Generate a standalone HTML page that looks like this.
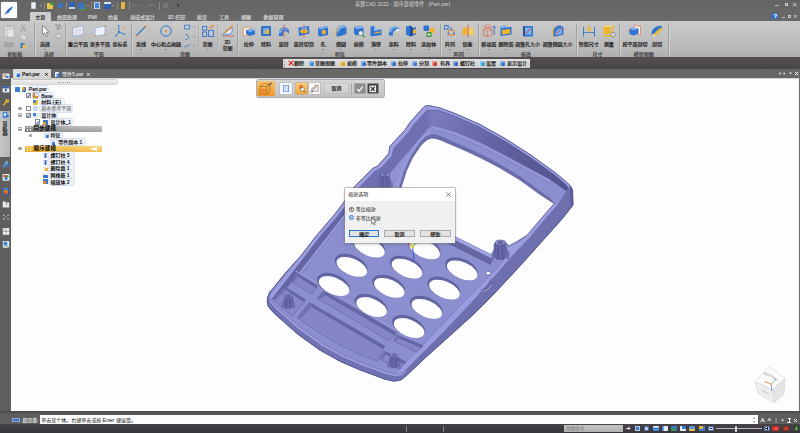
<!DOCTYPE html>
<html lang="zh">
<head>
<meta charset="utf-8">
<title>CAD 2022 - Part.par</title>
<style>
*{box-sizing:border-box;margin:0;padding:0}
html,body{width:800px;height:433px;overflow:hidden;background:#fdfdfd}
body{position:relative;font-family:"Liberation Sans",sans-serif;font-size:5px;color:#222;line-height:1}
.abs,.abs *{position:absolute}
.t{position:absolute;white-space:nowrap;font-size:5px;line-height:6px;color:#2a2a2a;-webkit-text-stroke:0.18px currentColor}
.tw{color:#e8e8e8}
.tx{position:absolute;white-space:nowrap;line-height:1.3;font-family:"Liberation Sans","Noto Sans CJK SC",sans-serif}
.tx.s{-webkit-text-stroke:0.18px currentColor}
.tx.b{font-weight:bold}
.c{text-align:center}
#title{left:0;top:0;width:800px;height:21px;background:linear-gradient(#646464,#6a6a6a)}
#ribbon{left:0;top:21px;width:800px;height:37px;background:linear-gradient(#cacaca,#c0c0c0 45%,#b9b9b9 75%,#adadad)}
#darkbar{left:0;top:57px;width:800px;height:12.2px;background:linear-gradient(#554f53,#48444a)}
#tabrow{left:0;top:68.8px;width:800px;height:9.6px;background:#676767}
#side{left:0;top:78px;width:11px;height:346px;background:#5e5e5e}
#view{left:11px;top:78.3px;width:789px;height:332.7px;background:#fdfdfd;border-top:1px solid #d6d6d6}
#prompt{left:0;top:408px;width:800px;height:11px;background:#5a5a5a}
#status{left:0;top:418px;width:800px;height:15px;background:#484848}
.sep{position:absolute;width:0.8px;background:#a2a2a2;top:23px;height:33px;box-shadow:0.8px 0 0 0 #d2d2d2}
.gl{position:absolute;top:50.5px;font-size:5px;line-height:6px;color:#3a3a3a;text-align:center;white-space:nowrap}
</style>
</head>
<body>
<!-- ===== chrome backgrounds ===== -->
<div class="abs" id="title"></div>
<div class="abs" id="ribbon"></div>
<div class="abs" id="darkbar"></div>
<div class="abs" id="tabrow"></div>
<div class="abs" id="view"></div>
<div class="abs" id="side"></div>

<div style="position:absolute;left:1.0px;top:2.0px;width:15.5px;height:15.5px;background:#fbfbfb;border-radius:1px;box-shadow:0 0 0 0.5px #888"></div>
<svg style="position:absolute;left:1px;top:2px" width="16" height="16" viewBox="0 0 16 16"><path d="M4,12.2 C5.2,8.6 8,5.8 12,4.2 C11.4,6.6 9.6,8.4 7.6,9.6 L9.2,9.4 C7.8,10.8 6,11.4 4.6,11.6 Z" fill="#2d6fc4"/><path d="M3.6,12.8 L6.2,10" stroke="#1d4f94" stroke-width="0.6"/></svg>
<div style="position:absolute;left:31.0px;top:2.0px;width:5.0px;height:7.0px;background:#eef2f8;border-radius:0.6px;box-shadow:inset 0 0 0 0.5px #9ab"></div>
<svg style="position:absolute;left:38.6px;top:3.9px" width="3.8" height="3.8" viewBox="-1.9 -1.9 3.8 3.8"><path d="M-0.90,-0.56 L0.90,-0.56 L0.00,0.56 Z" fill="#c0c0c0"/></svg>
<div style="position:absolute;left:43.5px;top:2.0px;width:0.6px;height:8.0px;background:#888;"></div>
<div style="position:absolute;left:46.5px;top:3.2px;width:6.5px;height:5.5px;background:#e8c84a;border-radius:0.6px;"></div>
<div style="position:absolute;left:49.5px;top:2.0px;width:4.0px;height:3.0px;background:#3d9a3d;border-radius:0.6px;border-radius:2px"></div>
<div style="position:absolute;left:58.0px;top:3.0px;width:4.5px;height:4.5px;background:#3a78c8;border-radius:0.6px;border-radius:2px"></div>
<div style="position:absolute;left:65.5px;top:2.0px;width:0.6px;height:8.0px;background:#888;"></div>
<div style="position:absolute;left:68.5px;top:2.2px;width:6.0px;height:6.5px;background:#2f62b8;border-radius:0.6px;box-shadow:inset 0 -2px 0 0 #c8d4ea"></div>
<div style="position:absolute;left:78.0px;top:2.5px;width:6.0px;height:6.0px;background:#3a70c0;border-radius:0.6px;box-shadow:1.2px 1.2px 0 0 #4a9a4a"></div>
<svg style="position:absolute;left:86.1px;top:3.9px" width="3.8" height="3.8" viewBox="-1.9 -1.9 3.8 3.8"><path d="M-0.90,-0.56 L0.90,-0.56 L0.00,0.56 Z" fill="#c0c0c0"/></svg>
<div style="position:absolute;left:91.0px;top:2.0px;width:0.6px;height:8.0px;background:#888;"></div>
<div style="position:absolute;left:94.0px;top:2.2px;width:6.0px;height:6.5px;background:#4a86d8;border-radius:0.6px;box-shadow:inset 0 0 0 0.8px #dde6f4"></div>
<div style="position:absolute;left:104.0px;top:2.2px;width:6.5px;height:6.5px;background:#2f5fb0;border-radius:0.6px;box-shadow:inset 0 2px 0 0 #d8e2f2"></div>
<svg style="position:absolute;left:111.1px;top:3.9px" width="3.8" height="3.8" viewBox="-1.9 -1.9 3.8 3.8"><path d="M-0.90,-0.56 L0.90,-0.56 L0.00,0.56 Z" fill="#c0c0c0"/></svg>
<div style="position:absolute;left:116.5px;top:2.0px;width:0.6px;height:8.0px;background:#888;"></div>
<div style="position:absolute;left:120.5px;top:2.0px;width:4.5px;height:7.0px;background:#e6b840;border-radius:0.6px;"></div>
<div style="position:absolute;left:129.0px;top:2.0px;width:0.6px;height:8.0px;background:#888;"></div>
<svg style="position:absolute;left:132px;top:2.5px" width="7" height="6" viewBox="0 0 7 6"><path d="M1,3 C2,0.8 5.6,0.8 6,4.4 M1,3 l0.2,-2 M1,3 l2,0.2" stroke="#7e7e7e" stroke-width="0.8" fill="none"/></svg>
<svg style="position:absolute;left:139.6px;top:3.9px" width="3.8" height="3.8" viewBox="-1.9 -1.9 3.8 3.8"><path d="M-0.90,-0.56 L0.90,-0.56 L0.00,0.56 Z" fill="#888"/></svg>
<svg style="position:absolute;left:145.5px;top:2.5px" width="7" height="6" viewBox="0 0 7 6"><path d="M6,3 C5,0.8 1.4,0.8 1,4.4 M6,3 l-0.2,-2 M6,3 l-2,0.2" stroke="#7e7e7e" stroke-width="0.8" fill="none"/></svg>
<svg style="position:absolute;left:153.1px;top:3.9px" width="3.8" height="3.8" viewBox="-1.9 -1.9 3.8 3.8"><path d="M-0.90,-0.56 L0.90,-0.56 L0.00,0.56 Z" fill="#888"/></svg>
<div style="position:absolute;left:158.5px;top:2.0px;width:0.6px;height:8.0px;background:#888;"></div>
<div style="position:absolute;left:163.0px;top:2.5px;width:5.0px;height:5.5px;background:#777;border-radius:0.6px;"></div>
<svg style="position:absolute;left:175.8px;top:3.6px" width="4.4" height="4.4" viewBox="-2.2 -2.2 4.4 4.4"><path d="M-1.20,-0.74 L1.20,-0.74 L0.00,0.74 Z" fill="#2c2c2c"/></svg>
<div style="position:absolute;left:176.6px;top:3.6px;width:2.8px;height:0.6px;background:#2c2c2c;"></div>
<div class="tx" style="left:354.9px;top:1.4px;font-size:5.15px;color:#d2d2d2">青翼CAD 2022 - 顺序建模零件 - [Part.par]</div>
<div class="t tw" style="top:1.5px;left:775.0px;font-size:6px;color:#ddd">–</div>
<div style="position:absolute;left:784.5px;top:2.8px;width:3.2px;height:3.2px;background:transparent;border:0.6px solid #ccc"></div>
<svg style="position:absolute;left:791.8px;top:1.9px" width="5.4" height="5.4" viewBox="-2.7 -2.7 5.4 5.4"><path d="M-1.7,-1.7 L1.7,1.7 M1.7,-1.7 L-1.7,1.7" stroke="#ececec" stroke-width="0.8" fill="none"/></svg>
<div style="position:absolute;left:772.2px;top:12.6px;width:6.0px;height:6.8px;background:#2f6ed0;border-radius:0.8px"></div>
<div class="t" style="top:13.1px;left:773.7px;font-size:5.5px;color:#fff;font-weight:bold">?</div>
<div class="t tw" style="top:13.5px;left:782.0px;font-size:5px;color:#ddd">–</div>
<div style="position:absolute;left:788.0px;top:14.8px;width:2.8px;height:2.8px;background:transparent;border:0.6px solid #ccc"></div>
<svg style="position:absolute;left:792.8px;top:14.0px" width="4.8" height="4.8" viewBox="-2.4 -2.4 4.8 4.8"><path d="M-1.4,-1.4 L1.4,1.4 M1.4,-1.4 L-1.4,1.4" stroke="#ececec" stroke-width="0.7" fill="none"/></svg>
<div style="position:absolute;left:30.0px;top:12.0px;width:20.5px;height:9.5px;background:#cdcdcd;border-radius:1.2px 1.2px 0 0"></div>
<div class="tx s" style="left:35.2px;top:13.5px;font-size:5px;color:#1e1e1e">主页</div>
<div class="tx s" style="left:57.0px;top:13.5px;font-size:5px;color:#d6d6d6">曲面处理</div>
<div class="t tw" style="top:13.8px;left:62.5px;width:60px;text-align:center;color:#d6d6d6">PMI</div>
<div class="tx s" style="left:108.0px;top:13.5px;font-size:5px;color:#d6d6d6">仿真</div>
<div class="tx s" style="left:130.0px;top:13.5px;font-size:5px;color:#d6d6d6">创成式设计</div>
<div class="tx s" style="left:167.6px;top:13.5px;font-size:5px;color:#d6d6d6">3D 打印</div>
<div class="tx s" style="left:197.0px;top:13.5px;font-size:5px;color:#d6d6d6">检查</div>
<div class="tx s" style="left:219.0px;top:13.5px;font-size:5px;color:#d6d6d6">工具</div>
<div class="tx s" style="left:241.0px;top:13.5px;font-size:5px;color:#d6d6d6">视图</div>
<div class="tx s" style="left:263.5px;top:13.5px;font-size:5px;color:#d6d6d6">数据管理</div>

<div class="sep" style="left:34.0px"></div>
<div class="sep" style="left:64.5px"></div>
<div class="sep" style="left:130.5px"></div>
<div class="sep" style="left:237.0px"></div>
<div class="sep" style="left:440.0px"></div>
<div class="sep" style="left:477.5px"></div>
<div class="sep" style="left:575.7px"></div>
<div class="sep" style="left:619.0px"></div>
<div class="sep" style="left:667.5px"></div>
<div class="sep" style="left:198.3px;top:24px;height:25px;opacity:.55"></div>
<div class="sep" style="left:217.3px;top:24px;height:25px;opacity:.55"></div>
<div class="tx s" style="left:7.5px;top:50.9px;font-size:5px;color:#3c3c3c">剪贴板</div>
<div class="tx s" style="left:44.0px;top:50.9px;font-size:5px;color:#3c3c3c">选择</div>
<div class="tx s" style="left:93.7px;top:50.9px;font-size:5px;color:#3c3c3c">平面</div>
<div class="tx s" style="left:180.0px;top:50.9px;font-size:5px;color:#3c3c3c">草图</div>
<div class="tx s" style="left:335.0px;top:50.9px;font-size:5px;color:#3c3c3c">特征</div>
<div class="tx s" style="left:453.7px;top:50.9px;font-size:5px;color:#3c3c3c">阵列</div>
<div class="tx s" style="left:521.0px;top:50.9px;font-size:5px;color:#3c3c3c">修改</div>
<div class="tx s" style="left:592.5px;top:50.9px;font-size:5px;color:#3c3c3c">尺寸</div>
<div class="tx s" style="left:633.7px;top:50.9px;font-size:5px;color:#3c3c3c">模型视图</div>
<svg style="position:absolute;left:1.7px;top:23.5px" width="14" height="14" viewBox="-7 -7 14 14"><rect x="-4.5" y="-5" width="9" height="11" rx="1" fill="#d8d8d8" stroke="#aaa" stroke-width="0.5"/><rect x="-2" y="-6" width="4" height="2.2" fill="#bbb"/><rect x="-1.5" y="-1.5" width="6.5" height="7.5" fill="#e6e6e6" stroke="#b0b0b0" stroke-width="0.4"/></svg>
<div class="tx s" style="left:3.7px;top:41.3px;font-size:5px;color:#9a9a9a">粘贴</div>
<svg style="position:absolute;left:38.0px;top:23.5px" width="14" height="14" viewBox="-7 -7 14 14"><path d="M-2.5,-5.5 L-2.5,3.8 L-0.3,1.8 L1.3,5.5 L2.8,4.8 L1.3,1.2 L4,1.2Z" fill="#fafafa" stroke="#555" stroke-width="0.6"/></svg>
<div class="tx s" style="left:40.0px;top:41.3px;font-size:5px;color:#1c1c1c">选择</div>
<svg style="position:absolute;left:71.0px;top:23.5px" width="14" height="14" viewBox="-7 -7 14 14"><path d="M-5,-3 L5,-5 L5,3.5 L-5,5Z" fill="#f2f6fc" stroke="#6a9ee0" stroke-width="0.55"/><path d="M-2.8,-1.4 L3,-2.4 L3,1.8 L-2.8,2.8Z" fill="#d6e4f6" stroke="#e8a070" stroke-width="0.3"/></svg>
<div class="tx s" style="left:68.0px;top:41.3px;font-size:5px;color:#1c1c1c">重合平面</div>
<svg style="position:absolute;left:93.0px;top:23.5px" width="14" height="14" viewBox="-7 -7 14 14"><path d="M-5,-3 L5,-5 L5,3.5 L-5,5Z" fill="#eef3fb" stroke="#6a9ee0" stroke-width="0.55"/><circle cx="-5" cy="5" r="0.8" fill="#e8862a"/><circle cx="5" cy="-5" r="0.8" fill="#e8862a"/><circle cx="5" cy="3.5" r="0.7" fill="#e8862a"/></svg>
<div class="tx s" style="left:90.0px;top:41.3px;font-size:5px;color:#1c1c1c">更多平面</div>
<svg style="position:absolute;left:113.0px;top:23.5px" width="14" height="14" viewBox="-7 -7 14 14"><path d="M-1,1 L-4,5 M-1,1 L4.5,3.2 M-1,1 L-1.4,-5.5" stroke="#2f74d0" stroke-width="0.8" fill="none"/><circle cx="-1" cy="1" r="1.1" fill="#2f74d0"/><circle cx="-4" cy="5" r="0.8" fill="#2f74d0"/><circle cx="4.5" cy="3.2" r="0.8" fill="#2f74d0"/><circle cx="-1.4" cy="-5.5" r="0.8" fill="#2f74d0"/><path d="M2,-4 l2,0 M4.6,-1.8 l1.2,-1.6" stroke="#e8862a" stroke-width="0.6"/></svg>
<div class="tx s" style="left:112.5px;top:41.3px;font-size:5px;color:#1c1c1c">坐标系</div>
<svg style="position:absolute;left:134.0px;top:23.5px" width="14" height="14" viewBox="-7 -7 14 14"><path d="M-4.5,4.5 L4.5,-4.5" stroke="#2f74d0" stroke-width="1.1"/><circle cx="-4.5" cy="4.5" r="1" fill="#e8862a"/><circle cx="4.5" cy="-4.5" r="1" fill="#e8862a"/></svg>
<div class="tx s" style="left:136.0px;top:41.3px;font-size:5px;color:#1c1c1c">直线</div>
<svg style="position:absolute;left:159.0px;top:23.5px" width="14" height="14" viewBox="-7 -7 14 14"><circle cx="0" cy="0" r="5.2" fill="none" stroke="#2f74d0" stroke-width="1"/><circle cx="0" cy="0" r="1" fill="#e8862a"/></svg>
<div class="tx s" style="left:151.0px;top:41.3px;font-size:5px;color:#1c1c1c">中心和点画圆</div>
<svg style="position:absolute;left:200.5px;top:23.5px" width="14" height="14" viewBox="-7 -7 14 14"><rect x="-5.5" y="-4.5" width="4.2" height="3.6" fill="none" stroke="#2f74d0" stroke-width="0.9"/><rect x="-5.5" y="1" width="4.2" height="4.4" fill="none" stroke="#2f74d0" stroke-width="0.9"/><rect x="0.6" y="-0.5" width="5" height="5.9" fill="none" stroke="#2f74d0" stroke-width="0.9"/><path d="M1.5,-2 L5.5,-6" stroke="#e8862a" stroke-width="1.2"/></svg>
<div class="tx s" style="left:202.5px;top:41.3px;font-size:5px;color:#1c1c1c">草图</div>
<svg style="position:absolute;left:220.5px;top:23.5px" width="14" height="14" viewBox="-7 -7 14 14"><path d="M-5,3.5 L-1,-1.5 L5,-2.5 L3,3Z" fill="#dfe9f8" stroke="#2f74d0" stroke-width="0.6"/><path d="M-3,2 L4.5,-5.5" stroke="#e8862a" stroke-width="1.2"/><path d="M-6,5 L6,5" stroke="#c44" stroke-width="0.6"/></svg>
<svg style="position:absolute;left:241.7px;top:23.5px" width="14" height="14" viewBox="-7 -7 14 14"><path d="M-5.5,-3.5 L1.5,-3.5 L1.5,4.5 L-5.5,4.5Z" fill="#fdeee6" stroke="#e8862a" stroke-width="0.6"/><path d="M-3,-1 L3,-2.5 L6,-0.5 L6,3.5 L0.5,5 L-3,3Z" fill="#2f74d0"/><path d="M-3,-1 L3,-2.5 L6,-0.5 L0.5,1Z" fill="#7fb2ec"/></svg>
<div class="tx s" style="left:243.7px;top:41.3px;font-size:5px;color:#1c1c1c">拉伸</div>
<svg style="position:absolute;left:259.0px;top:23.5px" width="14" height="14" viewBox="-7 -7 14 14"><rect x="-5" y="-5" width="10" height="10" rx="1" fill="#2f74d0"/><path d="M-2.5,-2.5 L3,-2.5 L3,3 L-2.5,3Z" fill="#f0b428"/><path d="M-2.5,-2.5 L3,-2.5 L1,-0.5 L-0.5,-0.5 L-0.5,3 L-2.5,3Z" fill="#7fb2ec"/></svg>
<div class="tx s" style="left:261.0px;top:41.3px;font-size:5px;color:#1c1c1c">除料</div>
<svg style="position:absolute;left:276.7px;top:23.5px" width="14" height="14" viewBox="-7 -7 14 14"><path d="M-5,2 C-5,-5 5,-5 5,0 L5,3 C3,-1 -1,-1 -1,3 L-1,5 L-5,5Z" fill="#2f74d0"/><path d="M-5,2 C-5,-3 3,-4 5,0 C2,-2 -2,-2 -3,2Z" fill="#7fb2ec"/><path d="M0,-6.5 L0,6.5" stroke="#d33" stroke-width="0.6"/></svg>
<div class="tx s" style="left:278.7px;top:41.3px;font-size:5px;color:#1c1c1c">旋转</div>
<svg style="position:absolute;left:296.7px;top:23.5px" width="14" height="14" viewBox="-7 -7 14 14"><path d="M-5.5,-3.5 L5,-5 L5.5,2.5 L-5,5Z" fill="#2f74d0"/><ellipse cx="0" cy="0.2" rx="3.8" ry="2" fill="#f0b428"/><ellipse cx="0.4" cy="-2.5" rx="3.2" ry="1.3" fill="#7fb2ec"/><path d="M0,-6.5 L0,6.5" stroke="#d33" stroke-width="0.5"/></svg>
<div class="tx s" style="left:293.7px;top:41.3px;font-size:5px;color:#1c1c1c">旋转切割</div>
<svg style="position:absolute;left:316.0px;top:23.5px" width="14" height="14" viewBox="-7 -7 14 14"><path d="M-5,-3 L3,-5 L5,-3.5 L5,4 L-3,5.5 L-5,4Z" fill="#2f74d0"/><path d="M-5,-3 L3,-5 L5,-3.5 L-3,-1.5Z" fill="#7fb2ec"/><ellipse cx="0.8" cy="1.2" rx="2" ry="2.4" fill="#f0b428"/></svg>
<div class="tx s" style="left:320.5px;top:41.3px;font-size:5px;color:#1c1c1c">孔</div>
<svg style="position:absolute;left:334.0px;top:23.5px" width="14" height="14" viewBox="-7 -7 14 14"><path d="M-5,5 L-5,0 C-5,-4 -1,-5.5 3,-5.5 L5.5,-3.5 L5.5,3 L-2,5.5Z" fill="#2f74d0"/><path d="M-5,0 C-5,-4 -1,-5.5 3,-5.5 L5.5,-3.5 C1,-3.5 -2.5,-2 -2.5,2Z" fill="#7fb2ec"/><path d="M-5,5 L-5,0 C-4.6,-2 -3.5,-3.6 -2,-4.5" stroke="#f0b428" stroke-width="1" fill="none"/></svg>
<div class="tx s" style="left:336.0px;top:41.3px;font-size:5px;color:#1c1c1c">倒圆</div>
<svg style="position:absolute;left:351.7px;top:23.5px" width="14" height="14" viewBox="-7 -7 14 14"><path d="M-5,-4 L2.5,-5 L4.5,-3 L4.5,3 L-3,4.5 L-5,2.5Z" fill="#2f74d0"/><path d="M-5,-4 L2.5,-5 L4.5,-3 L-3,-2Z" fill="#7fb2ec"/><circle cx="1.8" cy="2.2" r="2.4" fill="#dfeaf8" stroke="#567" stroke-width="0.6"/><path d="M3.4,4 L5.8,6.4" stroke="#3a9a3a" stroke-width="1.3"/></svg>
<div class="tx s" style="left:353.7px;top:41.3px;font-size:5px;color:#1c1c1c">拔模</div>
<svg style="position:absolute;left:369.0px;top:23.5px" width="14" height="14" viewBox="-7 -7 14 14"><path d="M-5.5,-4.5 L-2,-5.5 L-2,0 L5.5,-1.5 L5.5,4 L-5.5,5.5Z" fill="#2f74d0"/><path d="M-5.5,-4.5 L-2,-5.5 L-2,0 L5.5,-1.5 L4,-2.5 L-0.5,-1.6 L-0.5,-4.6Z" fill="#7fb2ec"/><path d="M-1.5,1.5 L4.5,0.3 L4.5,1.6 L-1.5,2.8Z" fill="#f0b428"/></svg>
<div class="tx s" style="left:371.0px;top:41.3px;font-size:5px;color:#1c1c1c">薄壁</div>
<svg style="position:absolute;left:386.7px;top:23.5px" width="14" height="14" viewBox="-7 -7 14 14"><path d="M-5,1 C-5,-4.5 2,-5.5 5,-3 L5,0.5 C3,-1.5 -1,-1.5 -1,2 L-1,4.5 L-5,4.5Z" fill="#2f74d0"/><path d="M-5,1 C-5,-4.5 2,-5.5 5,-3 C1,-3.8 -2.5,-2 -3,1.5Z" fill="#7fb2ec"/><circle cx="3.5" cy="-1" r="1.6" fill="#e8eef8"/></svg>
<div class="tx s" style="left:388.7px;top:41.3px;font-size:5px;color:#1c1c1c">添料</div>
<svg style="position:absolute;left:404.0px;top:23.5px" width="14" height="14" viewBox="-7 -7 14 14"><path d="M-5,-4.5 L-0.5,-5.5 L2,-3 L5,-4 L5,3.5 L-1,5.5 L-5,3.5Z" fill="#2f74d0"/><path d="M-0.5,-5.5 L2,-3 L2,4.5 L-1,5.5 L-1,-2Z" fill="#1f4f9a"/><path d="M2,-1 L5,-2 L5,2 L2,3Z" fill="#f0b428"/></svg>
<div class="tx s" style="left:406.0px;top:41.3px;font-size:5px;color:#1c1c1c">除料</div>
<svg style="position:absolute;left:421.7px;top:23.5px" width="14" height="14" viewBox="-7 -7 14 14"><rect x="-5.5" y="-5.5" width="5.5" height="5.5" fill="#2f74d0"/><rect x="0.5" y="-3" width="5" height="5" fill="#f0b428"/><rect x="-2.5" y="1" width="5" height="5" fill="#3a9a3a"/><path d="M-1.5,3.5 l3,0 M0,2 l0,3" stroke="#fff" stroke-width="0.9"/></svg>
<div class="tx s" style="left:421.2px;top:41.3px;font-size:5px;color:#1c1c1c">添加体</div>
<svg style="position:absolute;left:443.0px;top:23.5px" width="14" height="14" viewBox="-7 -7 14 14"><rect x="-5.5" y="-5.5" width="3.6" height="3.6" fill="none" stroke="#2f74d0" stroke-width="0.9"/><circle cx="1.2" cy="1.5" r="3" fill="none" stroke="#e8862a" stroke-width="1.1"/><circle cx="1.2" cy="-1.5" r="0.9" fill="#2f74d0"/><circle cx="4" cy="2.5" r="0.9" fill="#2f74d0"/><circle cx="-1.6" cy="2.5" r="0.9" fill="#2f74d0"/><path d="M-1,-3.7 l3,0" stroke="#2f74d0" stroke-width="0.6"/></svg>
<div class="tx s" style="left:445.0px;top:41.3px;font-size:5px;color:#1c1c1c">阵列</div>
<svg style="position:absolute;left:460.5px;top:23.5px" width="14" height="14" viewBox="-7 -7 14 14"><path d="M-0.8,-3.5 C-5.5,-5.5 -6.5,1 -5,4.5 L-0.8,3.5Z" fill="#f0b428"/><path d="M0.8,-3.5 C5.5,-5.5 6.5,1 5,4.5 L0.8,3.5Z" fill="#f6cf5a"/><path d="M0,-6.5 L0,6.5" stroke="#d44" stroke-width="0.7"/></svg>
<div class="tx s" style="left:462.5px;top:41.3px;font-size:5px;color:#1c1c1c">镜像</div>
<svg style="position:absolute;left:481.7px;top:23.5px" width="14" height="14" viewBox="-7 -7 14 14"><path d="M-5.5,-1.5 L-1,-3 L3,-1.5 L3,4 L-1.5,5.5 L-5.5,4Z" fill="none" stroke="#e05a3a" stroke-width="0.7"/><path d="M-5.5,-1.5 L-1.5,0 L3,-1.5 M-1.5,0 L-1.5,5.5" stroke="#e05a3a" stroke-width="0.5" fill="none"/><ellipse cx="-1.2" cy="-4.6" rx="3.8" ry="1.4" fill="none" stroke="#e05a3a" stroke-width="0.6"/><path d="M5.2,4 L5.2,-4.5 M3.8,-3 L5.2,-5.2 L6.6,-3" stroke="#2f74d0" stroke-width="0.9" fill="none"/></svg>
<div class="tx s" style="left:481.2px;top:41.3px;font-size:5px;color:#1c1c1c">移动面</div>
<svg style="position:absolute;left:499.0px;top:23.5px" width="14" height="14" viewBox="-7 -7 14 14"><path d="M-5.5,-4.5 L-1,-5.5 L0.5,-3.5 L5.5,-4 L5.5,3.5 L-5.5,5Z" fill="#2f74d0"/><path d="M-4,-1 L4,-2 L4,2.5 L-4,3.5Z" fill="#f0b428"/><path d="M-5.5,-4.5 L-1,-5.5 L0.5,-3.5 L-5.5,-2.5Z" fill="#7fb2ec"/></svg>
<div class="tx s" style="left:498.5px;top:41.3px;font-size:5px;color:#1c1c1c">删除面</div>
<svg style="position:absolute;left:520.5px;top:23.5px" width="14" height="14" viewBox="-7 -7 14 14"><rect x="-5" y="-5" width="10" height="10.5" rx="0.8" fill="#2f74d0"/><rect x="-3" y="-3.4" width="6.5" height="7" fill="#7fb2ec"/><path d="M-2.5,3 L3,-3" stroke="#d33" stroke-width="0.9"/><path d="M-5,-5 L-3,-3.4 L-3,3.6 L-5,5.5Z" fill="#1f4f9a"/></svg>
<div class="tx s" style="left:515.0px;top:41.3px;font-size:5px;color:#1c1c1c">调整孔大小</div>
<svg style="position:absolute;left:550.5px;top:23.5px" width="14" height="14" viewBox="-7 -7 14 14"><path d="M-5,5.5 L-5,0 C-5,-4 -1.5,-5.5 2.5,-5.5 L5.5,-3.5 L5.5,3.5 L-2,5.5Z" fill="#2f74d0"/><path d="M-2.8,3.5 C-2.8,-0.5 0,-3 4,-3 L4,2.4 L-2.8,4.4Z" fill="#7fb2ec"/><path d="M-2.6,3.2 L3.6,-2.6" stroke="#d33" stroke-width="0.9"/><path d="M-5,5.5 L-5,0 C-4.6,-2.4 -3,-4 -1,-4.8" stroke="#f0b428" stroke-width="1" fill="none"/></svg>
<div class="tx s" style="left:542.5px;top:41.3px;font-size:5px;color:#1c1c1c">调整倒圆大小</div>
<svg style="position:absolute;left:581.7px;top:23.5px" width="14" height="14" viewBox="-7 -7 14 14"><path d="M-5.5,-4 L-5.5,5.5 M5.5,-4 L5.5,5.5 M-5.5,1.5 L5.5,1.5" stroke="#2f74d0" stroke-width="0.9" fill="none"/><path d="M0.8,-6.2 L-2,-0.8 L0.2,-0.8 L-0.8,3.6 L2.8,-2.4 L0.6,-2.4Z" fill="#f0b428"/></svg>
<div class="tx s" style="left:578.7px;top:41.3px;font-size:5px;color:#1c1c1c">智能尺寸</div>
<svg style="position:absolute;left:601.7px;top:23.5px" width="14" height="14" viewBox="-7 -7 14 14"><rect x="-5.5" y="-4" width="7" height="7" fill="#f0b428"/><path d="M-5.5,-4 L-3.8,-5.6 L3.2,-5.6 L1.5,-4Z" fill="#f8d878"/><path d="M-6,5 L3,5 M4,-6 L4,4" stroke="#f0b428" stroke-width="1.3"/><circle cx="4.2" cy="3.6" r="2.2" fill="#ddd" stroke="#666" stroke-width="0.6"/></svg>
<div class="tx s" style="left:603.7px;top:41.3px;font-size:5px;color:#1c1c1c">测量</div>
<svg style="position:absolute;left:628.0px;top:23.5px" width="14" height="14" viewBox="-7 -7 14 14"><path d="M-1,-5.5 L5.5,-4.5 L5.5,3.5 L-1,2.5Z" fill="#fdeee6" stroke="#e0603a" stroke-width="0.6"/><path d="M-5.5,-2 L-1.5,-3.5 L3.5,-2.5 L3.5,2.5 L-1.5,4.5 L-5.5,3Z" fill="#2f74d0"/><path d="M-5.5,-2 L-1.5,-3.5 L3.5,-2.5 L-0.5,-0.8Z" fill="#7fb2ec"/><path d="M-6.5,0 l1.8,0" stroke="#d33" stroke-width="0.8"/></svg>
<div class="tx s" style="left:622.5px;top:41.3px;font-size:5px;color:#1c1c1c">按平面剖切</div>
<svg style="position:absolute;left:650.0px;top:23.5px" width="14" height="14" viewBox="-7 -7 14 14"><path d="M-5.5,3 C-5.5,-2 -0.5,-6 4.5,-5 L5.5,-2 C1.5,-2.5 -1.5,0.5 -2.5,5.2Z" fill="#2f74d0"/><path d="M-3.8,3.2 L3.8,-3.6 L5.6,-1.8 L-2,5Z" fill="#f0b428"/><ellipse cx="-2.9" cy="4.1" rx="1.3" ry="1.4" fill="#f8dc86"/></svg>
<div class="tx s" style="left:652.0px;top:41.3px;font-size:5px;color:#1c1c1c">剖切</div>
<div class="t" style="top:40.2px;left:197.5px;width:60px;text-align:center;font-size:4.5px;color:#1c1c1c">3D</div>
<div class="tx s" style="left:222.5px;top:44.7px;font-size:5px;color:#1c1c1c">草图</div>
<svg style="position:absolute;left:43.1px;top:48.4px" width="3.7" height="3.7" viewBox="-1.85 -1.85 3.7 3.7"><path d="M-0.85,-0.53 L0.85,-0.53 L0.00,0.53 Z" fill="#444"/></svg>
<svg style="position:absolute;left:139.2px;top:48.4px" width="3.7" height="3.7" viewBox="-1.85 -1.85 3.7 3.7"><path d="M-0.85,-0.53 L0.85,-0.53 L0.00,0.53 Z" fill="#444"/></svg>
<svg style="position:absolute;left:164.2px;top:48.4px" width="3.7" height="3.7" viewBox="-1.85 -1.85 3.7 3.7"><path d="M-0.85,-0.53 L0.85,-0.53 L0.00,0.53 Z" fill="#444"/></svg>
<svg style="position:absolute;left:205.7px;top:48.4px" width="3.7" height="3.7" viewBox="-1.85 -1.85 3.7 3.7"><path d="M-0.85,-0.53 L0.85,-0.53 L0.00,0.53 Z" fill="#444"/></svg>
<svg style="position:absolute;left:321.1px;top:48.4px" width="3.7" height="3.7" viewBox="-1.85 -1.85 3.7 3.7"><path d="M-0.85,-0.53 L0.85,-0.53 L0.00,0.53 Z" fill="#444"/></svg>
<svg style="position:absolute;left:339.1px;top:48.4px" width="3.7" height="3.7" viewBox="-1.85 -1.85 3.7 3.7"><path d="M-0.85,-0.53 L0.85,-0.53 L0.00,0.53 Z" fill="#444"/></svg>
<svg style="position:absolute;left:374.1px;top:48.4px" width="3.7" height="3.7" viewBox="-1.85 -1.85 3.7 3.7"><path d="M-0.85,-0.53 L0.85,-0.53 L0.00,0.53 Z" fill="#444"/></svg>
<svg style="position:absolute;left:391.8px;top:48.4px" width="3.7" height="3.7" viewBox="-1.85 -1.85 3.7 3.7"><path d="M-0.85,-0.53 L0.85,-0.53 L0.00,0.53 Z" fill="#444"/></svg>
<svg style="position:absolute;left:409.1px;top:48.4px" width="3.7" height="3.7" viewBox="-1.85 -1.85 3.7 3.7"><path d="M-0.85,-0.53 L0.85,-0.53 L0.00,0.53 Z" fill="#444"/></svg>
<svg style="position:absolute;left:426.8px;top:48.4px" width="3.7" height="3.7" viewBox="-1.85 -1.85 3.7 3.7"><path d="M-0.85,-0.53 L0.85,-0.53 L0.00,0.53 Z" fill="#444"/></svg>
<svg style="position:absolute;left:448.1px;top:48.4px" width="3.7" height="3.7" viewBox="-1.85 -1.85 3.7 3.7"><path d="M-0.85,-0.53 L0.85,-0.53 L0.00,0.53 Z" fill="#444"/></svg>
<svg style="position:absolute;left:465.6px;top:48.4px" width="3.7" height="3.7" viewBox="-1.85 -1.85 3.7 3.7"><path d="M-0.85,-0.53 L0.85,-0.53 L0.00,0.53 Z" fill="#444"/></svg>
<svg style="position:absolute;left:486.8px;top:48.4px" width="3.7" height="3.7" viewBox="-1.85 -1.85 3.7 3.7"><path d="M-0.85,-0.53 L0.85,-0.53 L0.00,0.53 Z" fill="#444"/></svg>
<svg style="position:absolute;left:504.1px;top:48.4px" width="3.7" height="3.7" viewBox="-1.85 -1.85 3.7 3.7"><path d="M-0.85,-0.53 L0.85,-0.53 L0.00,0.53 Z" fill="#444"/></svg>
<svg style="position:absolute;left:19px;top:23px" width="14" height="28" viewBox="0 0 14 28"><path d="M2.5,1.5 L6,7 M6,1.5 L2.5,7" stroke="#9a9a9a" stroke-width="0.8"/><circle cx="2.6" cy="7.4" r="1" fill="none" stroke="#999" stroke-width="0.6"/><circle cx="5.9" cy="7.4" r="1" fill="none" stroke="#999" stroke-width="0.6"/><rect x="1.8" y="11" width="3.6" height="4.4" fill="#dcdcdc" stroke="#aaa" stroke-width="0.4"/><rect x="3.2" y="12.4" width="3.6" height="4.4" fill="#e4e4e4" stroke="#aaa" stroke-width="0.4"/><rect x="1.5" y="20" width="4" height="5" fill="#3a78c8"/><rect x="3.6" y="21.5" width="3.4" height="3.8" fill="#e8c040"/><path d="M10.5,22.8 l1.6,0 l-0.8,1z" fill="#555"/></svg>
<svg style="position:absolute;left:54px;top:23px" width="10" height="18" viewBox="0 0 10 18"><path d="M1.5,2 L6.5,2 L4.6,4.2 L4.6,6.5 L3.4,6.5 L3.4,4.2Z" fill="none" stroke="#777" stroke-width="0.6"/><path d="M6,4 l1.6,0 M6,5.4 l1.6,0" stroke="#777" stroke-width="0.5"/><rect x="2" y="11" width="5.5" height="3.8" rx="0.8" fill="#d8d8d8" stroke="#888" stroke-width="0.5"/></svg>
<svg style="position:absolute;left:182px;top:23px" width="16" height="28" viewBox="0 0 16 28"><rect x="2.6" y="2.2" width="5.2" height="3.8" fill="none" stroke="#2f74d0" stroke-width="0.8"/><path d="M3.5,11.5 C7.5,11.5 7.5,16.5 3.5,16.5" fill="none" stroke="#2f74d0" stroke-width="0.8"/><path d="M2.5,24.5 C4,20.5 5.5,26 8,21" fill="none" stroke="#2f74d0" stroke-width="0.8"/><path d="M11.5,3.6 l1.6,0 l-0.8,1z M11.5,13.6 l1.6,0 l-0.8,1z M11.5,22.6 l1.6,0 l-0.8,1z" fill="#555"/></svg>

<div style="position:absolute;left:282.5px;top:59.0px;width:247.0px;height:9.0px;background:linear-gradient(#e2e2e2,#cfcfcf);border-radius:0.8px"></div>
<div style="position:absolute;left:284.2px;top:60.5px;width:0.8px;height:6.0px;background:repeating-linear-gradient(#888 0 0.8px,transparent 0.8px 1.6px);"></div>
<svg style="position:absolute;left:288px;top:60.3px" width="6" height="6" viewBox="0 0 6 6"><path d="M0.6,0.6 L5.4,5.4 M5.4,0.6 L0.6,5.4" stroke="#d8281c" stroke-width="1.2"/></svg>
<div class="tx s" style="left:294.0px;top:60.3px;font-size:5px;color:#1a1a1a">删除</div>
<div style="position:absolute;left:309.0px;top:60.6px;width:5.0px;height:5.4px;background:#3a8ad8;border-radius:1px;box-shadow:inset 1.5px 1.5px 0 0 rgba(255,255,255,.45)"></div>
<div class="tx s" style="left:315.0px;top:60.3px;font-size:5px;color:#1a1a1a">草图视图</div>
<div style="position:absolute;left:340.0px;top:60.6px;width:5.0px;height:5.4px;background:#e0a020;border-radius:1px;box-shadow:inset 1.5px 1.5px 0 0 rgba(255,255,255,.45)"></div>
<div class="tx s" style="left:347.0px;top:60.3px;font-size:5px;color:#1a1a1a">拔模</div>
<div style="position:absolute;left:361.0px;top:60.6px;width:5.0px;height:5.4px;background:#3070c8;border-radius:1px;box-shadow:inset 1.5px 1.5px 0 0 rgba(255,255,255,.45)"></div>
<div class="tx s" style="left:367.0px;top:60.3px;font-size:5px;color:#1a1a1a">零件副本</div>
<div style="position:absolute;left:391.0px;top:60.6px;width:5.0px;height:5.4px;background:#2f6fc8;border-radius:1px;box-shadow:inset 1.5px 1.5px 0 0 rgba(255,255,255,.45)"></div>
<div class="tx s" style="left:398.0px;top:60.3px;font-size:5px;color:#1a1a1a">拉伸</div>
<div style="position:absolute;left:412.0px;top:60.6px;width:5.0px;height:5.4px;background:#4a7ad0;border-radius:1px;box-shadow:inset 1.5px 1.5px 0 0 rgba(255,255,255,.45)"></div>
<div class="tx s" style="left:419.0px;top:60.3px;font-size:5px;color:#1a1a1a">分割</div>
<div style="position:absolute;left:432.0px;top:60.6px;width:5.0px;height:5.4px;background:#d04030;border-radius:1px;box-shadow:inset 1.5px 1.5px 0 0 rgba(255,255,255,.45)"></div>
<div class="tx s" style="left:440.0px;top:60.3px;font-size:5px;color:#1a1a1a">有界</div>
<div style="position:absolute;left:453.0px;top:60.6px;width:5.0px;height:5.4px;background:#3a68c0;border-radius:1px;box-shadow:inset 1.5px 1.5px 0 0 rgba(255,255,255,.45)"></div>
<div class="tx s" style="left:460.0px;top:60.3px;font-size:5px;color:#1a1a1a">螺钉柱</div>
<div style="position:absolute;left:480.0px;top:60.6px;width:5.0px;height:5.4px;background:#30a0d0;border-radius:1px;box-shadow:inset 1.5px 1.5px 0 0 rgba(255,255,255,.45)"></div>
<div class="tx s" style="left:486.0px;top:60.3px;font-size:5px;color:#1a1a1a">设置</div>
<div style="position:absolute;left:500.0px;top:60.6px;width:5.0px;height:5.4px;background:#2a78d0;border-radius:1px;box-shadow:inset 1.5px 1.5px 0 0 rgba(255,255,255,.45)"></div>
<div class="tx s" style="left:507.0px;top:60.3px;font-size:5px;color:#1a1a1a">显示设计</div>

<div style="position:absolute;left:12.5px;top:69.4px;width:38.0px;height:10.2px;background:linear-gradient(#e0e0e0,#d0d0d0);border-radius:1.2px 1.2px 0 0"></div>
<div style="position:absolute;left:15.0px;top:71.6px;width:4.6px;height:5.0px;background:#2f78d4;border-radius:0.6px;box-shadow:inset 1.6px 1.6px 0 0 #e8f0fb"></div>
<div class="t" style="top:71.3px;left:22.0px;color:#1a1a1a">Part.par</div>
<svg style="position:absolute;left:43.8px;top:72.0px" width="4.8" height="4.8" viewBox="-2.4 -2.4 4.8 4.8"><path d="M-1.4,-1.4 L1.4,1.4 M1.4,-1.4 L-1.4,1.4" stroke="#1c1c1c" stroke-width="0.9" fill="none"/></svg>
<div style="position:absolute;left:54.5px;top:71.6px;width:4.8px;height:5.0px;background:#3a86e0;border-radius:0.6px;box-shadow:inset 1.6px 1.6px 0 0 #e8f0fb"></div>
<div class="tx s" style="left:62.0px;top:71.0px;font-size:5px;color:#d2d2d2">零件5.par</div>
<svg style="position:absolute;left:86.2px;top:72.0px" width="4.8" height="4.8" viewBox="-2.4 -2.4 4.8 4.8"><path d="M-1.4,-1.4 L1.4,1.4 M1.4,-1.4 L-1.4,1.4" stroke="#f2f2f2" stroke-width="0.9" fill="none"/></svg>
<svg style="position:absolute;left:776.6px;top:70.6px" width="5.2" height="5.2" viewBox="-2.6 -2.6 5.2 5.2"><path d="M0.99,-1.60 L0.99,1.60 L-0.99,0.00 Z" fill="#d8d8d8"/></svg>
<svg style="position:absolute;left:782.2px;top:70.6px" width="5.2" height="5.2" viewBox="-2.6 -2.6 5.2 5.2"><path d="M-0.99,-1.60 L-0.99,1.60 L0.99,0.00 Z" fill="#d8d8d8"/></svg>
<svg style="position:absolute;left:788.0px;top:71.1px" width="5" height="5" viewBox="-2.5 -2.5 5 5"><path d="M-1.50,-0.93 L1.50,-0.93 L0.00,0.93 Z" fill="#e4e4e4"/></svg>
<svg style="position:absolute;left:793.6px;top:70.6px" width="5.2" height="5.2" viewBox="-2.6 -2.6 5.2 5.2"><path d="M-1.6,-1.6 L1.6,1.6 M1.6,-1.6 L-1.6,1.6" stroke="#f4f4f4" stroke-width="1" fill="none"/></svg>
<div style="position:absolute;left:798.8px;top:78.0px;width:1.2px;height:333.0px;background:#6a6a6a;"></div>

<svg style="position:absolute;left:1.5px;top:71.5px" width="8" height="9" viewBox="0 0 8 9"><rect x="0.5" y="1.5" width="7" height="5.6" rx="0.8" fill="#dfe8f4"/><rect x="1.6" y="2.6" width="2.6" height="2" fill="#e09040"/><rect x="3.6" y="3.8" width="2.8" height="2.2" fill="#3a7ad0"/></svg>
<svg style="position:absolute;left:1.5px;top:84.5px" width="8" height="9" viewBox="0 0 8 9"><rect x="0.6" y="1.2" width="6.8" height="6.4" rx="0.6" fill="#e4ecf8"/><rect x="0.6" y="1.2" width="6.8" height="2.2" fill="#2f5fa8"/><path d="M3,3.8 l2.2,1.3 l-2.2,1.3z" fill="#222"/></svg>
<svg style="position:absolute;left:1.5px;top:98.1px" width="8" height="9" viewBox="0 0 8 9"><path d="M1.2,7.4 L4.2,4" stroke="#e8b020" stroke-width="1.5"/><circle cx="5.2" cy="2.8" r="1.9" fill="#f0c030"/><circle cx="5.6" cy="2.4" r="0.6" fill="#5e5e5e"/></svg>
<svg style="position:absolute;left:1.5px;top:159.5px" width="8" height="9" viewBox="0 0 8 9"><circle cx="2.2" cy="6" r="1.5" fill="#4a90e0"/><circle cx="4.2" cy="3.6" r="1.5" fill="#5aa0ea"/><circle cx="6" cy="5.6" r="1.4" fill="#3a78c8"/><circle cx="4.6" cy="1.8" r="1.1" fill="#7ab4f0"/></svg>
<svg style="position:absolute;left:1.5px;top:172.5px" width="8" height="9" viewBox="0 0 8 9"><rect x="0.6" y="1" width="6.8" height="6.8" rx="0.8" fill="#e8eef6"/><circle cx="2.8" cy="3.2" r="1.4" fill="#e05030"/><circle cx="5.2" cy="3.4" r="1.3" fill="#40a040"/><circle cx="4" cy="5.6" r="1.5" fill="#3a70d0"/></svg>
<svg style="position:absolute;left:1.5px;top:186.5px" width="8" height="9" viewBox="0 0 8 9"><rect x="0.8" y="1" width="6.4" height="6.8" rx="0.6" fill="#2f4fb0"/><circle cx="3.6" cy="5" r="2.2" fill="#e8a020"/><circle cx="3.2" cy="5.4" r="1.2" fill="#e03020"/><path d="M1,2 l2,-0.8 l3.6,1.2" stroke="#50c0f0" stroke-width="0.8" fill="none"/></svg>
<svg style="position:absolute;left:1.5px;top:199.5px" width="8" height="9" viewBox="0 0 8 9"><path d="M0.8,1.6 l2.4,0 l0.8,0.9 l3.2,0 l0,5 l-6.4,0z" fill="#ececec"/><path d="M3.2,3.9 c0.6,-0.9 2,-0.5 1.6,0.5 l-0.8,0.7 M4,6.3 l0,0.5" stroke="#555" stroke-width="0.6" fill="none"/></svg>
<svg style="position:absolute;left:1.5px;top:213.0px" width="8" height="9" viewBox="0 0 8 9"><rect x="1" y="1.6" width="1.3" height="1.3" fill="#cfcfcf"/><rect x="5.4" y="1.6" width="1.3" height="1.3" fill="#cfcfcf"/><rect x="1" y="5.4" width="1.3" height="1.3" fill="#cfcfcf"/><rect x="5.4" y="5.4" width="1.3" height="1.3" fill="#cfcfcf"/><rect x="3.2" y="3.4" width="1.2" height="1.2" fill="#bdbdbd"/></svg>
<svg style="position:absolute;left:1.5px;top:226.5px" width="8" height="9" viewBox="0 0 8 9"><rect x="0.8" y="1" width="6.4" height="6.8" fill="#f2f2f2"/><path d="M0.8,4.4 l6.4,0 M4,1 l0,6.8" stroke="#777" stroke-width="0.6"/><rect x="1.4" y="1.6" width="2" height="2.2" fill="#c8c8c8"/></svg>
<svg style="position:absolute;left:1.5px;top:240.0px" width="8" height="9" viewBox="0 0 8 9"><rect x="0.8" y="1" width="6.4" height="6.8" rx="0.6" fill="#dfe8f4"/><circle cx="3.4" cy="3.6" r="2" fill="#3a80d8"/><path d="M4.4,5.2 l2.2,2.2" stroke="#3a9a3a" stroke-width="1"/><path d="M1.2,7 l1.6,-1.6 l1,0.8 l1.4,-1.2" stroke="#888" stroke-width="0.5" fill="none"/></svg>
<div style="position:absolute;left:0.0px;top:111.0px;width:9.8px;height:46.0px;background:linear-gradient(90deg,#c6c6c6,#b6b6b6);border-radius:0 1px 1px 0"></div>
<svg style="position:absolute;left:1.5px;top:111.1px" width="8" height="9" viewBox="0 0 8 9"><rect x="0.8" y="0.8" width="4.6" height="6" fill="#3a86d8"/><rect x="2" y="2" width="2" height="3" fill="#cfe2f8"/><path d="M4.2,4.4 l2.6,0 l0,2.8 l-2.6,0z" fill="#2f6ab8"/><path d="M4.6,6 c0.8,1.6 2,1.6 2.6,0" stroke="#e8f0fb" stroke-width="0.6" fill="none"/></svg>
<div class="tx s" style="left:2.5px;top:119.9px;font-size:5px;color:#1a1a1a">导</div>
<div class="tx s" style="left:2.5px;top:124.7px;font-size:5px;color:#1a1a1a">航</div>
<div class="tx s" style="left:2.5px;top:129.5px;font-size:5px;color:#1a1a1a">器</div>

<svg style="position:absolute;left:0;top:0" width="800" height="433" viewBox="0 0 800 433">
<defs><linearGradient id="wg" x1="430" y1="0" x2="566" y2="0" gradientUnits="userSpaceOnUse"><stop offset="0" stop-color="#7b7dc0"/><stop offset="0.5" stop-color="#6062a2"/><stop offset="1" stop-color="#52548c"/></linearGradient></defs>
<path d="M422.0,109.0 L424.5,106.3 L428.5,105.5 L440.0,108.0 L455.0,113.5 L480.0,124.5 L505.0,138.5 L530.0,154.5 L555.0,172.5 L566.0,181.5 L570.5,186.0 L572.5,190.0 L573.0,205.0 L562.3,218.7 L547.7,235.0 L530.4,254.4 L517.2,269.0 L495.5,292.3 L483.1,305.0 L472.4,315.4 L449.3,336.2 L426.2,357.0 L405.4,376.6 L400.8,380.0 L394.0,381.2 L385.0,379.2 L372.0,374.4 L360.0,370.0 L340.3,361.4 L320.0,350.2 L297.5,334.0 L292.5,329.6 L282.3,320.5 L274.2,313.4 L268.1,306.2 L267.3,302.0 L267.6,297.1 L271.6,290.0 L285.0,273.5 L301.6,255.0 L316.0,236.2 L335.0,214.0 L343.7,202.5 L352.5,188.7 L360.0,181.0 L372.5,168.5 L377.5,166.2 L388.7,153.7 L390.0,146.2 L405.0,130.0 L410.0,122.5Z" fill="#8c8fcf" stroke="#4a4c84" stroke-width="0.7" stroke-linejoin="round" stroke-linecap="round" />
<path d="M557.5,205.0 L539.0,226.5 L529.5,238.0 L517.4,250.5 L499.8,270.6 L476.0,297.8 L440.3,335.5 L418.0,357.5 L401.0,375.0 L405.4,376.6 L426.2,357.0 L449.3,336.2 L472.4,315.4 L483.1,305.0 L495.5,292.3 L517.2,269.0 L530.4,254.4 L547.7,235.0 L562.3,218.7 L573.0,205.0Z" fill="#6e70ae" />
<path d="M554.0,203.5 L535.5,225.0 L525.3,236.2 L512.3,250.0 L495.0,270.3 L468.1,297.5 L432.2,335.2 L411.0,357.0 L396.0,372.5 L401.0,375.0 L418.0,357.5 L440.3,335.5 L476.0,297.8 L499.8,270.6 L517.4,250.5 L529.5,238.0 L539.0,226.5 L557.5,205.0Z" fill="#9a9ce0" />
<path d="M557.5,205.0 L539.0,226.5 L529.5,238.0 L517.4,250.5 L499.8,270.6 L476.0,297.8 L440.3,335.5 L418.0,357.5 L401.0,375.0" fill="none" stroke="#4a4c84" stroke-width="0.35" stroke-linejoin="round" stroke-linecap="round" />
<path d="M554.0,203.5 L535.5,225.0 L525.3,236.2 L512.3,250.0 L495.0,270.3 L468.1,297.5 L432.2,335.2 L411.0,357.0 L396.0,372.5" fill="none" stroke="#4a4c84" stroke-width="0.3" stroke-linejoin="round" stroke-linecap="round" />
<path d="M566.5,191.0 L568.6,188.0 L570.5,186.0 L572.5,190.0 L573.0,205.0 L562.3,218.7 L557.5,205.0Z" fill="#6e70ae" />
<path d="M570.2,187.5 L572.5,190.0 L573.0,205.0 L570.2,208.2Z" fill="#5e60a0" />
<path d="M267.5,299.0 L280.8,282.0 L301.6,255.0 L316.0,236.2 L335.0,214.0 L343.7,202.5 L346.7,204.1 L338.0,215.6 L319.0,237.8 L304.6,256.6 L283.8,283.6 L270.5,300.6Z" fill="#9c9ee0" />
<path d="M270.5,300.6 L283.8,283.6 L304.6,256.6 L319.0,237.8 L338.0,215.6 L346.7,204.1 L351.5,205.0 L341.5,218.0 L323.9,240.4 L298.9,272.6 L284.5,290.3 L280.5,296.0Z" fill="#6466a4" />
<path d="M298.9,272.6 L323.9,240.4 L341.5,218.0 L351.5,205.0 L354.3,205.6 L344.3,218.6 L326.7,241.0 L301.7,273.2Z" fill="#9698da" />
<path d="M301.7,273.2 L326.7,241.0 L344.3,218.6 L354.3,205.6" fill="none" stroke="#4a4c84" stroke-width="0.25" stroke-linejoin="round" stroke-linecap="round" />
<path d="M280.5,296.0 L284.5,290.3 L298.9,272.6 L323.9,240.4 L341.5,218.0 L351.5,205.0" fill="none" stroke="#4a4c84" stroke-width="0.3" stroke-linejoin="round" stroke-linecap="round" />
<path d="M347.0,204.0 L356.0,190.5 L363.5,183.0 L375.0,171.0 L381.0,168.0 L392.0,156.0 L393.5,148.5 L408.0,133.0 L413.0,125.5 L425.0,112.0 L427.5,109.3 L431.0,110.5 L432.5,125.0 L429.4,127.0 L410.7,148.9 L394.0,168.6 L381.6,183.2 L372.0,195.0 L362.0,207.0Z" fill="#6e70b2" />
<path d="M343.7,202.5 L352.5,188.7 L360.0,181.0 L372.5,168.5 L377.5,166.2 L388.7,153.7 L390.0,146.2 L405.0,130.0 L410.0,122.5 L422.0,109.0 L424.5,106.3 L428.5,105.5 L431.0,110.5 L427.5,109.3 L425.0,112.0 L413.0,125.5 L408.0,133.0 L393.5,148.5 L392.0,156.0 L381.0,168.0 L375.0,171.0 L363.5,183.0 L356.0,190.5 L347.0,204.0Z" fill="#9c9ee0" />
<path d="M347.0,204.0 L356.0,190.5 L363.5,183.0 L375.0,171.0 L381.0,168.0 L392.0,156.0 L393.5,148.5 L408.0,133.0 L413.0,125.5 L425.0,112.0 L427.5,109.3 L431.0,110.5" fill="none" stroke="#4a4c84" stroke-width="0.3" stroke-linejoin="round" stroke-linecap="round" />
<path d="M432.5,125.0 L429.4,127.0 L410.7,148.9 L394.0,168.6 L381.6,183.2 L372.0,195.0 L362.0,207.0" fill="none" stroke="#4a4c84" stroke-width="0.3" stroke-linejoin="round" stroke-linecap="round" />
<path d="M432.5,125.0 L429.4,127.0 L410.7,148.9 L394.0,168.6 L381.6,183.2 L372.0,195.0 L362.0,207.0 L396.5,206.0 L396.5,206.0 L399.6,187.6 L404.6,171.0 L410.7,157.6 L418.5,145.5 L425.5,137.2 L431.0,134.8Z" fill="#9193d5" />
<path d="M428.4,134.2 L422.9,136.6 L415.9,144.9 L408.1,157.0 L402.0,170.4 L397.0,187.0 L393.9,205.4" fill="none" stroke="#a4a6e6" stroke-width="0.7" stroke-linejoin="round" stroke-linecap="round" />
<path d="M422.0,109.0 L424.5,106.3 L428.5,105.5 L440.0,108.0 L455.0,113.5 L480.0,124.5 L505.0,138.5 L530.0,154.5 L555.0,172.5 L566.0,181.5 L570.5,186.0 L568.6,188.0 L565.0,183.7 L555.0,175.2 L530.0,157.2 L505.0,141.2 L480.0,127.2 L455.0,116.2 L440.0,110.8 L431.0,110.0Z" fill="#9c9ee0" />
<path d="M431.0,110.0 L440.0,110.8 L455.0,116.2 L480.0,127.2 L505.0,141.2 L530.0,157.2 L555.0,175.2 L565.0,183.7 L568.6,188.0 L566.5,191.0 L550.0,179.5 L530.0,169.0 L505.0,155.5 L480.0,142.5 L455.0,132.0 L432.5,125.5Z" fill="url(#wg)"/>
<path d="M431.0,110.0 L440.0,110.8 L455.0,116.2 L480.0,127.2 L505.0,141.2 L530.0,157.2 L555.0,175.2 L565.0,183.7 L568.6,188.0" fill="none" stroke="#4a4c84" stroke-width="0.4" stroke-linejoin="round" stroke-linecap="round" />
<path d="M432.5,125.5 L455.0,132.0 L480.0,142.5 L505.0,155.5 L530.0,169.0 L550.0,179.5 L566.5,191.0" fill="none" stroke="#4a4c84" stroke-width="0.35" stroke-linejoin="round" stroke-linecap="round" />
<path d="M433.1,129.1 L455.6,135.6 L480.6,146.1 L505.6,159.1 L530.6,172.6 L550.6,183.1" fill="none" stroke="#4a4c84" stroke-width="0.3" stroke-linejoin="round" stroke-linecap="round" />
<path d="M432.5,125.5 L455.0,132.0 L480.0,142.5 L505.0,155.5 L530.0,169.0 L550.0,179.5 L550.6,182.9 L530.6,172.4 L505.6,158.9 L480.6,145.9 L455.6,135.4 L433.1,128.9Z" fill="#9496d8" />
<path d="M431.0,110.5 L432.5,125.0 L429.0,129.0 L427.5,114.0Z" fill="#7678ba" />
<path d="M421.5,141.0 L425.5,137.2 L431.0,134.8 L436.5,135.0 L445.0,138.6 L455.0,143.0 L467.0,148.2 L480.0,154.3 L490.0,159.4 L500.0,164.7 L510.0,170.7 L520.0,176.8 L530.0,184.0 L540.0,191.5 L550.0,198.6 L554.0,203.5 L535.5,225.0 L528.0,234.0 L525.3,236.2 L517.2,241.2 L509.0,245.8 L506.0,243.0 L500.0,241.0 L494.0,244.0 L494.0,256.0 L455.0,236.6 L398.0,206.0 L399.6,187.6 L404.6,171.0 L410.7,157.6 L418.5,145.5Z" fill="#6c6eb0" stroke="#4a4c84" stroke-width="0.4" stroke-linejoin="round" stroke-linecap="round" />
<path d="M425.0,141.5 L428.0,139.3 L431.6,138.2 L435.2,138.4 L440.2,139.9 L445.0,142.0 L455.0,146.3 L467.0,151.5 L480.0,157.6 L490.0,162.7 L500.0,168.0 L510.0,174.0 L520.0,180.1 L530.0,187.2 L540.0,194.5 L550.0,201.0 L554.0,203.5 L535.5,225.0 L528.0,234.0 L525.3,236.2 L517.2,241.2 L509.0,245.8 L506.0,243.0 L500.0,241.0 L494.0,244.0 L494.0,256.0 L455.0,236.6 L398.0,206.0 L401.2,187.6 L406.2,171.4 L412.3,158.2 L420.5,146.0Z" fill="#fdfdfd" stroke="#4a4c84" stroke-width="0.5" stroke-linejoin="round" stroke-linecap="round" />
<path d="M396.8,209.0 L453.8,239.6 L492.8,259.0 L490.8,265.0 L451.8,245.6 L394.8,215.0Z" fill="#6466a4" />
<path d="M398.0,206.0 L455.0,236.6 L494.0,256.0 L492.8,259.2 L453.8,239.8 L396.8,209.2Z" fill="#a0a2e2" />
<path d="M396.8,209.2 L453.8,239.8 L492.8,259.2" fill="none" stroke="#4a4c84" stroke-width="0.3" stroke-linejoin="round" stroke-linecap="round" />
<path d="M528.0,237.0 L516.0,244.0 L508.0,248.0 L504.0,262.0Z" fill="#9c9ee0" />
<g transform="translate(500.5,249.5) scale(1.15)">
<path d="M-7.5,3 L-4,-2 L-4,6 L-7,8.5Z M7.5,3 L4,-2 L4,6 L7,8.5Z" fill="#7678ba" stroke="#4a4c84" stroke-width="0.4"/>
<path d="M-4.5,-6 L4.5,-6 L5.2,5.5 L3,8.5 L-3,8.5 L-5.2,5.5Z" fill="#6668a8" stroke="#4a4c84" stroke-width="0.5"/>
<path d="M-2,-5 L-2.4,8 M1.6,-5 L2,8" stroke="#52548e" stroke-width="0.9" fill="none"/>
<ellipse cx="0" cy="-6" rx="4.5" ry="2.2" fill="#8a8cce" stroke="#4a4c84" stroke-width="0.5"/>
<ellipse cx="0" cy="-6" rx="2.2" ry="1.1" fill="#55578f"/>
</g>
<g transform="translate(385.0,180.5) scale(1)">
<path d="M-7.5,3 L-4,-2 L-4,6 L-7,8.5Z M7.5,3 L4,-2 L4,6 L7,8.5Z" fill="#7678ba" stroke="#4a4c84" stroke-width="0.4"/>
<path d="M-4.5,-6 L4.5,-6 L5.2,5.5 L3,8.5 L-3,8.5 L-5.2,5.5Z" fill="#6668a8" stroke="#4a4c84" stroke-width="0.5"/>
<path d="M-2,-5 L-2.4,8 M1.6,-5 L2,8" stroke="#52548e" stroke-width="0.9" fill="none"/>
<ellipse cx="0" cy="-6" rx="4.5" ry="2.2" fill="#8a8cce" stroke="#4a4c84" stroke-width="0.5"/>
<ellipse cx="0" cy="-6" rx="2.2" ry="1.1" fill="#55578f"/>
</g>
<ellipse cx="488.2" cy="273.2" rx="2.3" ry="1.7" fill="#fdfdfd" stroke="#4a4c84" stroke-width="0.5"/>
<path d="M481.0,290.0 L486.0,288.0 L489.0,284.0 L491.0,278.0" fill="none" stroke="#4a4c84" stroke-width="0.5" stroke-linejoin="round" stroke-linecap="round" />
<path d="M483.0,291.5 L488.0,289.5 L491.5,285.0" fill="none" stroke="#9c9ee0" stroke-width="1" stroke-linejoin="round" stroke-linecap="round" />
<path d="M296.2,271.2 L398.0,331.5" fill="none" stroke="#9a9cde" stroke-width="1.2" stroke-linejoin="round" stroke-linecap="round" />
<path d="M297.0,273.2 L398.0,333.5" fill="none" stroke="#4a4c84" stroke-width="0.3" stroke-linejoin="round" stroke-linecap="round" />
<path d="M323.7,291.0 L396.2,332.3 L389.4,341.2 L317.5,298.3Z" fill="#8486c8" stroke="#4a4c84" stroke-width="0.35" stroke-linejoin="round" stroke-linecap="round" />
<path d="M323.7,291.0 L396.2,332.3 L395.4,336.1 L325.8,295.4Z" fill="#6466a4" />
<path d="M323.7,291.0 L325.8,295.4 L320.1,298.5 L317.5,298.3Z" fill="#6e70b0" />
<path d="M309.5,302.6 L384.5,345.8 L377.5,361.0 L360.0,355.0 L335.0,342.5 L315.0,330.0 L297.5,318.0Z" fill="#8486c8" stroke="#4a4c84" stroke-width="0.35" stroke-linejoin="round" stroke-linecap="round" />
<path d="M309.5,302.6 L384.5,345.8 L383.7,349.6 L311.7,307.0Z" fill="#6466a4" />
<path d="M309.5,302.6 L311.7,307.0 L300.3,318.2 L297.5,318.0Z" fill="#6e70b0" />
<path d="M296.2,272.8 L317.5,285.7 L312.0,294.0 L291.6,282.0Z" fill="#8486c8" stroke="#4a4c84" stroke-width="0.35" stroke-linejoin="round" stroke-linecap="round" />
<path d="M296.2,272.8 L317.5,285.7 L316.7,288.7 L298.0,276.4Z" fill="#6466a4" />
<path d="M296.2,272.8 L298.0,276.4 L293.8,282.2 L291.6,282.0Z" fill="#6e70b0" />
<path d="M284.2,286.6 L305.4,299.6 L292.5,316.2 L273.0,299.6Z" fill="#8688ca" stroke="#4a4c84" stroke-width="0.35" stroke-linejoin="round" stroke-linecap="round" />
<path d="M284.2,286.6 L305.4,299.6 L304.6,302.4 L286.1,290.0Z" fill="#6466a4" />
<path d="M284.2,286.6 L286.1,290.0 L275.4,299.8 L273.0,299.6Z" fill="#6e70b0" />
<path d="M397.3,335.0 L422.7,345.4 L417.0,352.4 L393.9,340.8Z" fill="#8486c8" stroke="#4a4c84" stroke-width="0.35" stroke-linejoin="round" stroke-linecap="round" />
<path d="M397.3,335.0 L422.7,345.4 L421.9,348.2 L398.9,338.4Z" fill="#6466a4" />
<path d="M397.3,335.0 L398.9,338.4 L395.9,341.0 L393.9,340.8Z" fill="#6e70b0" />
<path d="M384.6,351.2 L405.4,361.6 L399.6,369.7 L380.0,359.3Z" fill="#8688ca" stroke="#4a4c84" stroke-width="0.35" stroke-linejoin="round" stroke-linecap="round" />
<path d="M384.6,351.2 L405.4,361.6 L404.6,364.2 L386.2,354.4Z" fill="#6466a4" />
<path d="M384.6,351.2 L386.2,354.4 L382.0,359.5 L380.0,359.3Z" fill="#6e70b0" />
<path d="M267.6,297.1 L267.3,302.0 L268.1,306.2 L274.2,313.4 L282.3,320.5 L292.5,329.6 L297.5,334.0 L320.0,350.2 L340.3,361.4 L360.0,370.0 L372.0,374.4 L385.0,379.2 L394.0,381.2 L400.8,380.0 L405.4,376.6 L406.6,372.0 L402.0,375.4 L395.2,376.6 L386.2,374.6 L373.2,369.8 L361.2,365.4 L341.5,356.8 L321.2,345.6 L298.7,329.4 L293.7,325.0 L283.5,315.9 L275.4,308.8 L269.3,301.6 L268.5,297.4 L268.8,292.5Z" fill="#7072b4" />
<path d="M268.8,292.5 L268.5,297.4 L269.3,301.6 L275.4,308.8 L283.5,315.9 L293.7,325.0 L298.7,329.4 L321.2,345.6 L341.5,356.8 L361.2,365.4 L373.2,369.8 L386.2,374.6 L395.2,376.6 L402.0,375.4 L406.6,372.0 L407.6,369.6 L403.0,373.0 L396.2,374.2 L387.2,372.2 L374.2,367.4 L362.2,363.0 L342.5,354.4 L322.2,343.2 L299.7,327.0 L294.7,322.6 L284.5,313.5 L276.4,306.4 L270.3,299.2 L269.5,295.0 L269.8,290.1Z" fill="#9a9cde" />
<path d="M268.8,292.5 L268.5,297.4 L269.3,301.6 L275.4,308.8 L283.5,315.9 L293.7,325.0 L298.7,329.4 L321.2,345.6 L341.5,356.8 L361.2,365.4 L373.2,369.8 L386.2,374.6 L395.2,376.6 L402.0,375.4 L406.6,372.0" fill="none" stroke="#4a4c84" stroke-width="0.3" stroke-linejoin="round" stroke-linecap="round" />
<path d="M269.8,290.1 L269.5,295.0 L270.3,299.2 L276.4,306.4 L284.5,313.5 L294.7,322.6 L299.7,327.0 L322.2,343.2 L342.5,354.4 L362.2,363.0 L374.2,367.4 L387.2,372.2 L396.2,374.2 L403.0,373.0 L407.6,369.6" fill="none" stroke="#4a4c84" stroke-width="0.3" stroke-linejoin="round" stroke-linecap="round" />
<g transform="translate(288.5,301.0) scale(0.85)">
<path d="M-7.5,3 L-4,-2 L-4,6 L-7,8.5Z M7.5,3 L4,-2 L4,6 L7,8.5Z" fill="#7678ba" stroke="#4a4c84" stroke-width="0.4"/>
<path d="M-4.5,-6 L4.5,-6 L5.2,5.5 L3,8.5 L-3,8.5 L-5.2,5.5Z" fill="#6668a8" stroke="#4a4c84" stroke-width="0.5"/>
<path d="M-2,-5 L-2.4,8 M1.6,-5 L2,8" stroke="#52548e" stroke-width="0.9" fill="none"/>
<ellipse cx="0" cy="-6" rx="4.5" ry="2.2" fill="#8a8cce" stroke="#4a4c84" stroke-width="0.5"/>
<ellipse cx="0" cy="-6" rx="2.2" ry="1.1" fill="#55578f"/>
</g>
<g transform="translate(394.0,360.5) scale(0.85)">
<path d="M-7.5,3 L-4,-2 L-4,6 L-7,8.5Z M7.5,3 L4,-2 L4,6 L7,8.5Z" fill="#7678ba" stroke="#4a4c84" stroke-width="0.4"/>
<path d="M-4.5,-6 L4.5,-6 L5.2,5.5 L3,8.5 L-3,8.5 L-5.2,5.5Z" fill="#6668a8" stroke="#4a4c84" stroke-width="0.5"/>
<path d="M-2,-5 L-2.4,8 M1.6,-5 L2,8" stroke="#52548e" stroke-width="0.9" fill="none"/>
<ellipse cx="0" cy="-6" rx="4.5" ry="2.2" fill="#8a8cce" stroke="#4a4c84" stroke-width="0.5"/>
<ellipse cx="0" cy="-6" rx="2.2" ry="1.1" fill="#55578f"/>
</g>
<g transform="translate(387.0,227.8) rotate(23)"><ellipse cx="-0.9" cy="-1.0" rx="17" ry="9.3" fill="#6466a4" stroke="#4a4c84" stroke-width="0.4"/><ellipse cx="0.4" cy="0.5" rx="16.2" ry="8.3" fill="#fdfdfd"/></g>
<g transform="translate(369.3,247.0) rotate(23)"><ellipse cx="-0.9" cy="-1.0" rx="17" ry="9.3" fill="#6466a4" stroke="#4a4c84" stroke-width="0.4"/><ellipse cx="0.4" cy="0.5" rx="16.2" ry="8.3" fill="#fdfdfd"/></g>
<g transform="translate(351.6,266.2) rotate(23)"><ellipse cx="-0.9" cy="-1.0" rx="17" ry="9.3" fill="#6466a4" stroke="#4a4c84" stroke-width="0.4"/><ellipse cx="0.4" cy="0.5" rx="16.2" ry="8.3" fill="#fdfdfd"/></g>
<g transform="translate(333.9,285.4) rotate(23)"><ellipse cx="-0.9" cy="-1.0" rx="17" ry="9.3" fill="#6466a4" stroke="#4a4c84" stroke-width="0.4"/><ellipse cx="0.4" cy="0.5" rx="16.2" ry="8.3" fill="#fdfdfd"/></g>
<g transform="translate(424.5,248.8) rotate(23)"><ellipse cx="-0.9" cy="-1.0" rx="17" ry="9.3" fill="#6466a4" stroke="#4a4c84" stroke-width="0.4"/><ellipse cx="0.4" cy="0.5" rx="16.2" ry="8.3" fill="#fdfdfd"/></g>
<g transform="translate(406.8,268.0) rotate(23)"><ellipse cx="-0.9" cy="-1.0" rx="17" ry="9.3" fill="#6466a4" stroke="#4a4c84" stroke-width="0.4"/><ellipse cx="0.4" cy="0.5" rx="16.2" ry="8.3" fill="#fdfdfd"/></g>
<g transform="translate(389.1,287.2) rotate(23)"><ellipse cx="-0.9" cy="-1.0" rx="17" ry="9.3" fill="#6466a4" stroke="#4a4c84" stroke-width="0.4"/><ellipse cx="0.4" cy="0.5" rx="16.2" ry="8.3" fill="#fdfdfd"/></g>
<g transform="translate(371.4,306.4) rotate(23)"><ellipse cx="-0.9" cy="-1.0" rx="17" ry="9.3" fill="#6466a4" stroke="#4a4c84" stroke-width="0.4"/><ellipse cx="0.4" cy="0.5" rx="16.2" ry="8.3" fill="#fdfdfd"/></g>
<g transform="translate(462.0,269.8) rotate(23)"><ellipse cx="-0.9" cy="-1.0" rx="17" ry="9.3" fill="#6466a4" stroke="#4a4c84" stroke-width="0.4"/><ellipse cx="0.4" cy="0.5" rx="16.2" ry="8.3" fill="#fdfdfd"/></g>
<g transform="translate(444.3,289.0) rotate(23)"><ellipse cx="-0.9" cy="-1.0" rx="17" ry="9.3" fill="#6466a4" stroke="#4a4c84" stroke-width="0.4"/><ellipse cx="0.4" cy="0.5" rx="16.2" ry="8.3" fill="#fdfdfd"/></g>
<g transform="translate(426.6,308.2) rotate(23)"><ellipse cx="-0.9" cy="-1.0" rx="17" ry="9.3" fill="#6466a4" stroke="#4a4c84" stroke-width="0.4"/><ellipse cx="0.4" cy="0.5" rx="16.2" ry="8.3" fill="#fdfdfd"/></g>
<g transform="translate(408.9,327.4) rotate(23)"><ellipse cx="-0.9" cy="-1.0" rx="17" ry="9.3" fill="#6466a4" stroke="#4a4c84" stroke-width="0.4"/><ellipse cx="0.4" cy="0.5" rx="16.2" ry="8.3" fill="#fdfdfd"/></g>
<path d="M422.0,109.0 L424.5,106.3 L428.5,105.5 L440.0,108.0 L455.0,113.5 L480.0,124.5 L505.0,138.5 L530.0,154.5 L555.0,172.5 L566.0,181.5 L570.5,186.0 L572.5,190.0 L573.0,205.0 L562.3,218.7 L547.7,235.0 L530.4,254.4 L517.2,269.0 L495.5,292.3 L483.1,305.0 L472.4,315.4 L449.3,336.2 L426.2,357.0 L405.4,376.6 L400.8,380.0 L394.0,381.2 L385.0,379.2 L372.0,374.4 L360.0,370.0 L340.3,361.4 L320.0,350.2 L297.5,334.0 L292.5,329.6 L282.3,320.5 L274.2,313.4 L268.1,306.2 L267.3,302.0 L267.6,297.1 L271.6,290.0 L285.0,273.5 L301.6,255.0 L316.0,236.2 L335.0,214.0 L343.7,202.5 L352.5,188.7 L360.0,181.0 L372.5,168.5 L377.5,166.2 L388.7,153.7 L390.0,146.2 L405.0,130.0 L410.0,122.5Z" fill="none" stroke="#4a4c84" stroke-width="0.6" stroke-linejoin="round" stroke-linecap="round" />
<g stroke-width="0.9" fill="none"><path d="M412.5,246.2 L407.8,242.6" stroke="#d03030"/><path d="M412.5,246.2 L417.2,242.8" stroke="#30a040"/><path d="M412.5,246.2 L413.6,257" stroke="#3050d0"/></g><circle cx="412.5" cy="246.2" r="1.6" fill="#e8d020"/>
<path d="M412.4,257.6 l2.6,0 l-2.4,2.8 l2.6,0" stroke="#3050d0" stroke-width="0.6" fill="none"/>
</svg>

<div style="position:absolute;left:12.0px;top:80.4px;width:104.5px;height:3.2px;background:linear-gradient(#f0f0f0,#dedede);border-radius:0.6px;box-shadow:0 0 0 0.4px #b4b4b4"></div>
<div style="position:absolute;left:58.0px;top:81.5px;width:14.0px;height:1.0px;background:repeating-linear-gradient(90deg,#999 0 0.8px,transparent 0.8px 1.8px);"></div>
<div style="position:absolute;left:15.0px;top:86.8px;width:4.6px;height:5.0px;background:#3a80d8;border-radius:0.6px;"></div>
<div style="position:absolute;left:22.0px;top:87.0px;width:4.4px;height:4.6px;background:#e8a838;border-radius:0.6px;box-shadow:inset -1.5px -1.5px 0 0 #3a78c8"></div>
<div style="position:absolute;left:27.6px;top:86.1px;width:20.4px;height:6.4px;background:rgba(236,242,250,.9);border-radius:1px;box-shadow:0 0 0 0.4px #b8c4d8"></div><div class="t" style="top:86.3px;left:28.8px;color:#1a1a1a;">Part.par</div>
<div style="position:absolute;left:25.5px;top:93.2px;width:5.4px;height:5.2px;background:#fcfcfc;border:0.5px solid #8a8a98"></div><svg style="position:absolute;left:25.5px;top:93.3px" width="5" height="5" viewBox="0 0 5 5"><path d="M1,2.6 L2.1,3.8 L4.1,1.2" stroke="#1c3c9c" stroke-width="0.9" fill="none"/></svg>
<div style="position:absolute;left:33.2px;top:93.3px;width:5.0px;height:5.0px;background:#dfe8f6;border-radius:0.6px;box-shadow:inset 2px -2px 0 0 #e08a30, 0 0 0 .4px #7890b8"></div>
<div style="position:absolute;left:40.0px;top:92.6px;width:13.9px;height:6.4px;background:rgba(236,242,250,.9);border-radius:1px;box-shadow:0 0 0 0.4px #b8c4d8"></div><div class="t" style="top:92.8px;left:41.2px;color:#1a1a1a;">Base</div>
<div style="position:absolute;left:33.2px;top:99.7px;width:5.0px;height:5.0px;background:#3a78c8;border-radius:0.6px;box-shadow:inset -2.2px -2.2px 0 0 #e8c040"></div>
<div style="position:absolute;left:40.0px;top:99.0px;width:23.9px;height:6.4px;background:rgba(236,242,250,.9);border-radius:1px;box-shadow:0 0 0 0.4px #b8c4d8"></div><div class="tx s" style="left:41.2px;top:98.9px;font-size:5px;color:#1a1a1a">材料 (无)</div>
<div style="position:absolute;left:18.4px;top:106.7px;width:3.8px;height:3.8px;background:#fbfbfb;border:0.45px solid #b4b4b4"></div><div style="position:absolute;left:19.3px;top:108.3px;width:1.8px;height:0.5px;background:#7a7a7a;"></div><div style="position:absolute;left:19.9px;top:107.7px;width:0.5px;height:1.8px;background:#7a7a7a;"></div>
<div style="position:absolute;left:25.5px;top:106.0px;width:5.4px;height:5.2px;background:#fcfcfc;border:0.5px solid #8a8a98"></div>
<div style="position:absolute;left:33.2px;top:106.3px;width:5.0px;height:4.6px;background:#c8d8ee;border-radius:0.6px;"></div>
<div style="position:absolute;left:40.0px;top:105.4px;width:32.4px;height:6.4px;background:rgba(236,242,250,.9);border-radius:1px;box-shadow:0 0 0 0.4px #b8c4d8"></div><div class="tx s" style="left:41.2px;top:105.3px;font-size:5px;color:#8a8a8a">基本参考平面</div>
<div style="position:absolute;left:18.4px;top:113.3px;width:3.8px;height:3.8px;background:#fbfbfb;border:0.45px solid #b4b4b4"></div><div style="position:absolute;left:19.3px;top:115.0px;width:1.8px;height:0.5px;background:#7a7a7a;"></div>
<div style="position:absolute;left:25.5px;top:112.6px;width:5.4px;height:5.2px;background:#fcfcfc;border:0.5px solid #8a8a98"></div><svg style="position:absolute;left:25.5px;top:112.7px" width="5" height="5" viewBox="0 0 5 5"><path d="M1,2.6 L2.1,3.8 L4.1,1.2" stroke="#1c3c9c" stroke-width="0.9" fill="none"/></svg>
<div style="position:absolute;left:33.2px;top:112.7px;width:5.0px;height:5.0px;background:#3a80d8;border-radius:0.6px;box-shadow:inset -2px -2px 0 0 #d8e4f4"></div>
<div style="position:absolute;left:40.0px;top:112.0px;width:17.4px;height:6.4px;background:rgba(236,242,250,.9);border-radius:1px;box-shadow:0 0 0 0.4px #b8c4d8"></div><div class="tx s" style="left:41.2px;top:111.9px;font-size:5px;color:#1a1a1a">设计体</div>
<div style="position:absolute;left:35.0px;top:119.4px;width:5.4px;height:5.2px;background:#fcfcfc;border:0.5px solid #8a8a98"></div><svg style="position:absolute;left:35.0px;top:119.5px" width="5" height="5" viewBox="0 0 5 5"><path d="M1,2.6 L2.1,3.8 L4.1,1.2" stroke="#1c3c9c" stroke-width="0.9" fill="none"/></svg>
<div style="position:absolute;left:42.6px;top:119.5px;width:5.0px;height:5.0px;background:#e09a30;border-radius:0.6px;box-shadow:inset -2px 2px 0 0 #3a78c8"></div>
<div style="position:absolute;left:49.2px;top:118.8px;width:23.9px;height:6.4px;background:rgba(236,242,250,.9);border-radius:1px;box-shadow:0 0 0 0.4px #b8c4d8"></div><div class="tx s" style="left:50.4px;top:118.7px;font-size:5px;color:#1a1a1a">设计体_1</div>
<div style="position:absolute;left:18.4px;top:126.9px;width:3.8px;height:3.8px;background:#fbfbfb;border:0.45px solid #b4b4b4"></div><div style="position:absolute;left:19.3px;top:128.6px;width:1.8px;height:0.5px;background:#7a7a7a;"></div>
<div style="position:absolute;left:25.2px;top:125.7px;width:76.5px;height:6.3px;background:linear-gradient(rgba(255,255,255,.18),rgba(0,0,0,.10)),linear-gradient(90deg,#848484 0%,#969696 30%,#aaaaaa 60%,#b8b8b8 100%);border-radius:0.6px"></div>
<div style="position:absolute;left:27.0px;top:126.6px;width:1.2px;height:4.6px;background:repeating-linear-gradient(#f4f4f4 0 1.1px,transparent 1.1px 1.7px);"></div>
<div style="position:absolute;left:29.6px;top:126.6px;width:1.2px;height:4.6px;background:repeating-linear-gradient(#f4f4f4 0 1.1px,transparent 1.1px 1.7px);"></div>
<div class="tx b" style="left:33.6px;top:125.2px;font-size:5.6px;color:#0a0a0a">同步建模</div>
<div style="position:absolute;left:28.6px;top:133.5px;width:3.8px;height:3.8px;background:#fbfbfb;border:0.45px solid #b4b4b4"></div><div style="position:absolute;left:29.5px;top:135.2px;width:1.8px;height:0.5px;background:#7a7a7a;"></div>
<div style="position:absolute;left:43.5px;top:132.9px;width:5.0px;height:5.0px;background:#3a78c8;border-radius:0.6px;box-shadow:inset 2px 2px 0 0 #d8e4f4"></div>
<div style="position:absolute;left:49.4px;top:132.2px;width:12.4px;height:6.4px;background:rgba(236,242,250,.9);border-radius:1px;box-shadow:0 0 0 0.4px #b8c4d8"></div><div class="tx s" style="left:50.6px;top:132.1px;font-size:5px;color:#1a1a1a">特征</div>
<div style="position:absolute;left:50.4px;top:139.6px;width:5.0px;height:5.0px;background:#3a80d8;border-radius:0.6px;box-shadow:inset 2px 2px 0 0 #dce8f8"></div>
<div style="position:absolute;left:57.0px;top:138.9px;width:27.9px;height:6.4px;background:rgba(236,242,250,.9);border-radius:1px;box-shadow:0 0 0 0.4px #b8c4d8"></div><div class="tx s" style="left:58.2px;top:138.8px;font-size:5px;color:#1a1a1a">零件副本 1</div>
<div style="position:absolute;left:18.4px;top:146.7px;width:3.8px;height:3.8px;background:#fbfbfb;border:0.45px solid #b4b4b4"></div><div style="position:absolute;left:19.3px;top:148.3px;width:1.8px;height:0.5px;background:#7a7a7a;"></div>
<div style="position:absolute;left:25.2px;top:146.2px;width:76.5px;height:6.0px;background:linear-gradient(rgba(255,255,255,.22),rgba(255,255,255,0) 55%,rgba(160,90,0,.10)),linear-gradient(90deg,#f1b432 0%,#f4bf4a 50%,#f7cb66 100%);border-radius:0.6px"></div>
<div style="position:absolute;left:27.0px;top:147.0px;width:1.2px;height:4.4px;background:repeating-linear-gradient(#fff6dc 0 1.1px,transparent 1.1px 1.7px);"></div>
<div style="position:absolute;left:29.6px;top:147.0px;width:1.2px;height:4.4px;background:repeating-linear-gradient(#fff6dc 0 1.1px,transparent 1.1px 1.7px);"></div>
<div class="tx b" style="left:33.6px;top:145.4px;font-size:5.6px;color:#0a0a0a">顺序建模</div>
<svg style="position:absolute;left:88px;top:146.2px" width="12" height="6" viewBox="0 0 12 6"><path d="M1.6,3 L9.2,0.9 L9.2,5.1Z" fill="#fff"/></svg>
<div style="position:absolute;left:42.6px;top:153.0px;width:5.0px;height:5.2px;background:#3a68c0;border-radius:0.6px;box-shadow:inset 1.6px 0 0 0 #e6eefa, inset -1.6px 0 0 0 #e6eefa"></div>
<div style="position:absolute;left:49.2px;top:152.4px;width:24.9px;height:6.4px;background:rgba(236,242,250,.9);border-radius:1px;box-shadow:0 0 0 0.4px #b8c4d8"></div><div class="tx b" style="left:50.4px;top:152.3px;font-size:5px;color:#0c0c0c">螺钉柱 3</div>
<div style="position:absolute;left:42.6px;top:159.5px;width:5.0px;height:5.2px;background:#3a68c0;border-radius:0.6px;box-shadow:inset 1.6px 0 0 0 #e6eefa, inset -1.6px 0 0 0 #e6eefa"></div>
<div style="position:absolute;left:49.2px;top:158.9px;width:24.9px;height:6.4px;background:rgba(236,242,250,.9);border-radius:1px;box-shadow:0 0 0 0.4px #b8c4d8"></div><div class="tx b" style="left:50.4px;top:158.8px;font-size:5px;color:#0c0c0c">螺钉柱 4</div>
<div style="position:absolute;left:42.6px;top:166.0px;width:5.0px;height:5.2px;background:#e8b040;border-radius:0.6px;box-shadow:inset 2px 2px 0 0 #f4f0e0"></div>
<div style="position:absolute;left:49.2px;top:165.4px;width:24.9px;height:6.4px;background:rgba(236,242,250,.9);border-radius:1px;box-shadow:0 0 0 0.4px #b8c4d8"></div><div class="tx b" style="left:50.4px;top:165.3px;font-size:5px;color:#0c0c0c">删除面 1</div>
<div style="position:absolute;left:42.6px;top:172.5px;width:5.0px;height:5.2px;background:#3a78d0;border-radius:0.6px;box-shadow:inset 0 2px 0 0 #e6eefa"></div>
<div style="position:absolute;left:49.2px;top:171.9px;width:24.9px;height:6.4px;background:rgba(236,242,250,.9);border-radius:1px;box-shadow:0 0 0 0.4px #b8c4d8"></div><div class="tx b" style="left:50.4px;top:171.8px;font-size:5px;color:#0c0c0c">网格筋 1</div>
<div style="position:absolute;left:42.6px;top:179.2px;width:5.0px;height:5.2px;background:#e08a28;border-radius:0.6px;box-shadow:inset -2px 2px 0 0 #3a78c8"></div>
<div style="position:absolute;left:49.2px;top:178.6px;width:24.9px;height:6.4px;background:rgba(236,242,250,.9);border-radius:1px;box-shadow:0 0 0 0.4px #b8c4d8"></div><div class="tx b" style="left:50.4px;top:178.5px;font-size:5px;color:#0c0c0c">缩放体 2</div>

<div style="position:absolute;left:256.6px;top:80.3px;width:127.6px;height:16.4px;background:linear-gradient(#d6d6d6,#c2c2c2);border-radius:1.2px;box-shadow:0 0 0 0.7px #8890a4"></div>
<div style="position:absolute;left:257.2px;top:80.9px;width:17.6px;height:15.2px;background:linear-gradient(#f6c268,#ee9a2c);border-radius:1px"></div>
<svg style="position:absolute;left:258px;top:81.5px" width="16" height="14" viewBox="0 0 16 14"><path d="M2,4.5 L9,4.5 L9,12 L2,12Z M2,4.5 L5,1.8 L12,1.8 L9,4.5 M12,1.8 L12,9.4 L9,12" fill="none" stroke="#9a5a18" stroke-width="0.6"/><rect x="3" y="6.8" width="5" height="4.6" fill="#f08a30"/><path d="M10.2,3.6 L14,0.8" stroke="#3a3a6a" stroke-width="1"/></svg>
<div style="position:absolute;left:280.0px;top:83.4px;width:11.6px;height:10.2px;background:#f2f6fb;box-shadow:0 0 0 0.4px #a8b0c0"></div>
<div style="position:absolute;left:282.6px;top:85.0px;width:6.4px;height:7.0px;background:#cfe0f4;box-shadow:inset 0 0 0 0.6px #4a80c8"></div>
<div style="position:absolute;left:296.0px;top:83.2px;width:11.2px;height:10.6px;background:linear-gradient(#f8cc78,#f0a83c);box-shadow:0 0 0 0.4px #b88838"></div>
<svg style="position:absolute;left:297px;top:84px" width="10" height="9" viewBox="0 0 10 9"><rect x="2.2" y="1.2" width="3.6" height="3.6" fill="#e06a28"/><circle cx="5.6" cy="5.4" r="1.9" fill="#f4f4f4" stroke="#666" stroke-width="0.5"/><path d="M6.4,6.4 l1.8,2" stroke="#444" stroke-width="0.8"/></svg>
<div style="position:absolute;left:309.0px;top:83.4px;width:10.6px;height:10.2px;background:#f6f6f6;box-shadow:0 0 0 0.4px #aaa"></div>
<svg style="position:absolute;left:309.5px;top:84px" width="10" height="9" viewBox="0 0 10 9"><path d="M2,7.2 L2,4 L5,4 L5,1.4 L8.2,1.4 L8.2,7.2Z" fill="none" stroke="#666" stroke-width="0.6"/><path d="M2.4,6.8 L7.6,2" stroke="#c44" stroke-width="0.5"/><circle cx="1.6" cy="7.6" r="0.9" fill="none" stroke="#555" stroke-width="0.5"/></svg>
<div style="position:absolute;left:325.0px;top:83.6px;width:23.0px;height:9.8px;background:linear-gradient(#dadada,#cccccc);box-shadow:0 0 0 0.4px #b4b4b4"></div>
<div class="tx s" style="left:331.5px;top:85.3px;font-size:5px;color:#1a1a1a">取消</div>
<div style="position:absolute;left:351.4px;top:82.5px;width:0.6px;height:12.0px;background:#a8a8a8;"></div>
<div style="position:absolute;left:355.0px;top:83.6px;width:9.8px;height:9.8px;background:#8e8e8e;box-shadow:0 0 0 0.4px #6a6a6a"></div>
<svg style="position:absolute;left:355px;top:83.6px" width="9.8" height="9.8" viewBox="0 0 10 10"><path d="M2.2,5.2 L4.2,7.4 L7.8,2.4" stroke="#f2f2f2" stroke-width="1.4" fill="none"/></svg>
<div style="position:absolute;left:368.0px;top:83.6px;width:9.6px;height:9.8px;background:#444;box-shadow:0 0 0 0.4px #2a2a2a"></div>
<svg style="position:absolute;left:368px;top:83.6px" width="9.6" height="9.8" viewBox="0 0 10 10"><rect x="1.6" y="1.6" width="6.8" height="6.8" fill="#f4f4f4"/><path d="M3,3 L7,7 M7,3 L3,7" stroke="#333" stroke-width="1.3"/></svg>

<div style="position:absolute;left:344.7px;top:188.0px;width:110.6px;height:54.6px;background:#f0f0f0;box-shadow:0 0 0 0.5px #8a8a8a, 0 1px 3px rgba(0,0,0,.25)"></div>
<div style="position:absolute;left:344.7px;top:188.0px;width:110.6px;height:13.2px;background:#ffffff;"></div>
<div class="tx" style="left:348.2px;top:191.4px;font-size:5px;color:#111">缩放选项</div>
<svg style="position:absolute;left:445.6px;top:192.3px" width="5" height="5" viewBox="0 0 5 5"><path d="M0.4,0.4 L4.6,4.6 M4.6,0.4 L0.4,4.6" stroke="#222" stroke-width="0.55"/></svg>
<div style="position:absolute;left:349.3px;top:206.8px;width:4.8px;height:4.8px;background:#fff;border-radius:50%;border:0.45px solid #555"></div><div style="position:absolute;left:350.9px;top:208.4px;width:1.6px;height:1.6px;background:#444;border-radius:50%"></div>
<div class="tx" style="left:355.8px;top:206.0px;font-size:5px;color:#111">等比缩放</div>
<div style="position:absolute;left:349.3px;top:215.3px;width:4.8px;height:4.8px;background:#d6e6fa;border-radius:50%;border:0.45px solid #2a7ad8"></div><div style="position:absolute;left:350.9px;top:216.9px;width:1.6px;height:1.6px;background:#2a5ab8;border-radius:50%"></div>
<div class="tx" style="left:355.8px;top:214.5px;font-size:5px;color:#111">非等比缩放</div>
<div style="position:absolute;left:349.3px;top:230.0px;width:30.0px;height:7.4px;background:#e3e3e3;border:0.8px solid #2a7ad8"></div>
<div class="tx s" style="left:359.3px;top:230.5px;font-size:5px;color:#111">确定</div>
<div style="position:absolute;left:384.2px;top:230.0px;width:30.4px;height:7.4px;background:#e3e3e3;border:0.5px solid #adadad"></div>
<div class="tx s" style="left:394.4px;top:230.5px;font-size:5px;color:#111">取消</div>
<div style="position:absolute;left:420.0px;top:230.0px;width:30.7px;height:7.4px;background:#e3e3e3;border:0.5px solid #adadad"></div>
<div class="tx s" style="left:430.3px;top:230.5px;font-size:5px;color:#111">帮助</div>
<svg style="position:absolute;left:371px;top:216.5px" width="6" height="9" viewBox="0 0 6 9"><path d="M0.6,0.6 L0.6,6.8 L2,5.5 L3,7.9 L4,7.5 L3,5.2 L4.9,5.2Z" fill="#fff" stroke="#222" stroke-width="0.5"/></svg>

<div style="position:absolute;left:0.0px;top:411.0px;width:800.0px;height:3.0px;background:linear-gradient(#4a484c,#5a5a5a);"></div>
<div style="position:absolute;left:0.0px;top:413.6px;width:800.0px;height:10.6px;background:#5e5e5e;"></div>
<div style="position:absolute;left:0.0px;top:424.0px;width:800.0px;height:9.0px;background:linear-gradient(#454347,#38363a);"></div>
<div style="position:absolute;left:12.4px;top:418.4px;width:7.8px;height:3.4px;background:#3f6fc0;border-radius:0.5px;box-shadow:inset 0 0 0 0.5px #c8d8f0"></div>
<div class="tx s" style="left:22.4px;top:416.8px;font-size:5px;color:#e2e2e2">提示条</div>
<div style="position:absolute;left:39.7px;top:415.4px;width:718.5px;height:8.6px;background:#fdfdfd;"></div>
<div class="tx" style="left:41.2px;top:416.7px;font-size:5px;color:#111">单击某个体。右键单击或按 Enter 键接受。</div>
<svg style="position:absolute;left:752.1px;top:415.9px" width="4.2" height="4.2" viewBox="-2.1 -2.1 4.2 4.2"><path d="M-1.10,0.68 L1.10,0.68 L0.00,-0.68 Z" fill="#555"/></svg>
<svg style="position:absolute;left:752.1px;top:419.7px" width="4.2" height="4.2" viewBox="-2.1 -2.1 4.2 4.2"><path d="M-1.10,-0.68 L1.10,-0.68 L0.00,0.68 Z" fill="#555"/></svg>
<div class="t tw" style="top:417.0px;left:760.2px;font-family:'Liberation Serif',serif;font-size:6.5px;color:#eee">A</div>
<div class="t tw" style="top:417.4px;left:767.4px;font-family:'Liberation Serif',serif;font-size:5px;color:#eee">A</div>
<svg style="position:absolute;left:773.9px;top:416.5px" width="4.2" height="4.2" viewBox="-2.1 -2.1 4.2 4.2"><path d="M-1.10,0.68 L1.10,0.68 L0.00,-0.68 Z" fill="#ddd"/></svg>
<svg style="position:absolute;left:773.9px;top:419.5px" width="4.2" height="4.2" viewBox="-2.1 -2.1 4.2 4.2"><path d="M-1.10,-0.68 L1.10,-0.68 L0.00,0.68 Z" fill="#ddd"/></svg>
<svg style="position:absolute;left:779.9px;top:417.9px" width="5" height="5" viewBox="-2.5 -2.5 5 5"><path d="M-1.50,-0.93 L1.50,-0.93 L0.00,0.93 Z" fill="#eee"/></svg>
<div style="position:absolute;left:787.2px;top:421.6px;width:3.6px;height:0.7px;background:#eee;"></div>
<div style="position:absolute;left:788.7px;top:418.0px;width:0.7px;height:3.6px;background:#eee;"></div>
<div style="position:absolute;left:787.6px;top:418.0px;width:3.0px;height:0.6px;background:#eee;"></div>
<svg style="position:absolute;left:792.9px;top:417.5px" width="5" height="5" viewBox="-2.5 -2.5 5 5"><path d="M-1.5,-1.5 L1.5,1.5 M1.5,-1.5 L-1.5,1.5" stroke="#f4f4f4" stroke-width="0.9" fill="none"/></svg>
<div style="position:absolute;left:406.0px;top:425.5px;width:0.6px;height:6.0px;background:#888;"></div>
<div style="position:absolute;left:442.5px;top:425.5px;width:0.6px;height:6.0px;background:#888;"></div>
<div style="position:absolute;left:564.0px;top:425.2px;width:58.5px;height:6.8px;background:linear-gradient(#c6c6c6,#b2b2b2);border-radius:0.6px"></div>
<div class="tx s" style="left:566.0px;top:425.7px;font-size:4.6px;color:#8a8a8a">查找命令</div>
<svg style="position:absolute;left:624.5px;top:426px" width="6" height="5" viewBox="0 0 6 5"><path d="M0.4,3.6 C1.6,1.8 2.6,1.8 3.6,1.8 L3.6,0.6 L5.6,2.4 L3.6,4.2 L3.6,3 C2.6,3 1.6,3 0.4,3.6Z" fill="#e8e8e8"/></svg>
<div style="position:absolute;left:634.7px;top:425.8px;width:5.6px;height:5.6px;background:#3a78d0;border-radius:0.7px;box-shadow:inset 0 0 0 0.7px #dce8f8"></div>
<div style="position:absolute;left:643.7px;top:425.8px;width:5.6px;height:5.6px;background:#dfe8f4;border-radius:0.7px;border-radius:50%;box-shadow:inset 0 0 0 1px #3a6ab8"></div>
<div style="position:absolute;left:653.2px;top:425.8px;width:5.6px;height:5.6px;background:#4a88d8;border-radius:0.7px;box-shadow:inset 0 1.6px 0 0 #e8f0fb"></div>
<div style="position:absolute;left:662.2px;top:425.8px;width:5.6px;height:5.6px;background:#e4ecf8;border-radius:0.7px;box-shadow:inset 1.6px 0 0 0 #3a78d0"></div>
<div style="position:absolute;left:671.2px;top:425.8px;width:5.6px;height:5.6px;background:#3a9a4a;border-radius:0.7px;box-shadow:inset -2px 2px 0 0 #3a78d0"></div>
<div style="position:absolute;left:680.2px;top:425.8px;width:5.6px;height:5.6px;background:#3a78d0;border-radius:0.7px;box-shadow:inset 2px -2px 0 0 #e8f0fb"></div>
<div style="position:absolute;left:689.2px;top:425.8px;width:5.6px;height:5.6px;background:#5a98e0;border-radius:0.7px;box-shadow:inset 0 -2px 0 0 #e8c040"></div>
<div style="position:absolute;left:699.2px;top:425.8px;width:5.6px;height:5.6px;background:#e8b830;border-radius:0.7px;box-shadow:inset -2px -2px 0 0 #3a78d0"></div>
<div style="position:absolute;left:708.4px;top:425.8px;width:5.4px;height:5.4px;background:#e8eef6;border-radius:50%;box-shadow:inset 0 0 0 1px #3a62a8"></div>
<div style="position:absolute;left:709.8px;top:428.2px;width:2.6px;height:0.6px;background:#222;"></div>
<div style="position:absolute;left:716.0px;top:428.3px;width:46.0px;height:0.7px;background:#b8b8b8;"></div>
<div style="position:absolute;left:735.0px;top:425.6px;width:2.0px;height:6.0px;background:#d8d8d8;border-radius:0.4px"></div>
<div style="position:absolute;left:764.0px;top:425.6px;width:5.6px;height:5.6px;background:#e8eef6;border-radius:50%;box-shadow:inset 0 0 0 1px #3a62a8"></div>
<div style="position:absolute;left:765.4px;top:428.1px;width:2.8px;height:0.6px;background:#222;"></div>
<div style="position:absolute;left:766.5px;top:427.0px;width:0.6px;height:2.8px;background:#222;"></div>
<div style="position:absolute;left:772.4px;top:426.0px;width:6.4px;height:5.2px;background:#d83028;border-radius:1px"></div>
<div style="position:absolute;left:774.6px;top:427.6px;width:2.0px;height:1.8px;background:#f4d8d4;border-radius:0.4px"></div>
<div style="position:absolute;left:783.0px;top:425.6px;width:5.8px;height:5.8px;background:#c84030;border-radius:50%;box-shadow:inset 0 0 0 0.9px #8a2a20"></div>
<div style="position:absolute;left:793.6px;top:425.4px;width:5.4px;height:6.4px;background:#3a3a3a;border-radius:0.6px"></div>
<svg style="position:absolute;left:794px;top:426px" width="5" height="5.4" viewBox="0 0 5 5.4"><path d="M1.8,0.4 L3.2,0.4 L3.2,2.6 L4.4,2.6 L2.5,4.8 L0.6,2.6 L1.8,2.6Z" fill="#58c040"/></svg>
<svg style="position:absolute;left:750px;top:362px" width="40" height="44" viewBox="750 362 40 44"><path d="M768.8,366.7 L785,378 L772.5,390 L755.3,382Z" fill="#fbfbfb" stroke="#cfcfcf" stroke-width="0.5"/><path d="M755.3,382 L772.5,390 L774.2,402.7 L758,393.7Z" fill="#efefef" stroke="#cfcfcf" stroke-width="0.5"/><path d="M772.5,390 L785,378 L784.2,393.7 L774.2,402.7Z" fill="#e4e4e4" stroke="#cfcfcf" stroke-width="0.5"/><text x="770" y="377.5" font-family="Liberation Sans" font-size="3.6" fill="#8a8a8a" text-anchor="middle" transform="rotate(28 770 377.5)">BOTTOM</text><text x="765" y="393" font-family="Liberation Sans" font-size="2.6" fill="#a8a8a8" text-anchor="middle" transform="rotate(26 765 393)">FRONT</text><path d="M771.3,384.3 L764.5,381.5" stroke="#e06030" stroke-width="0.7"/><path d="M771.3,384.3 L771.8,391" stroke="#3050d0" stroke-width="0.6"/><path d="M771.3,384.3 L775.5,379.5" stroke="#30a040" stroke-width="0.6"/><circle cx="771.3" cy="384.3" r="0.9" fill="#e0c020"/></svg>

</body>
</html>
